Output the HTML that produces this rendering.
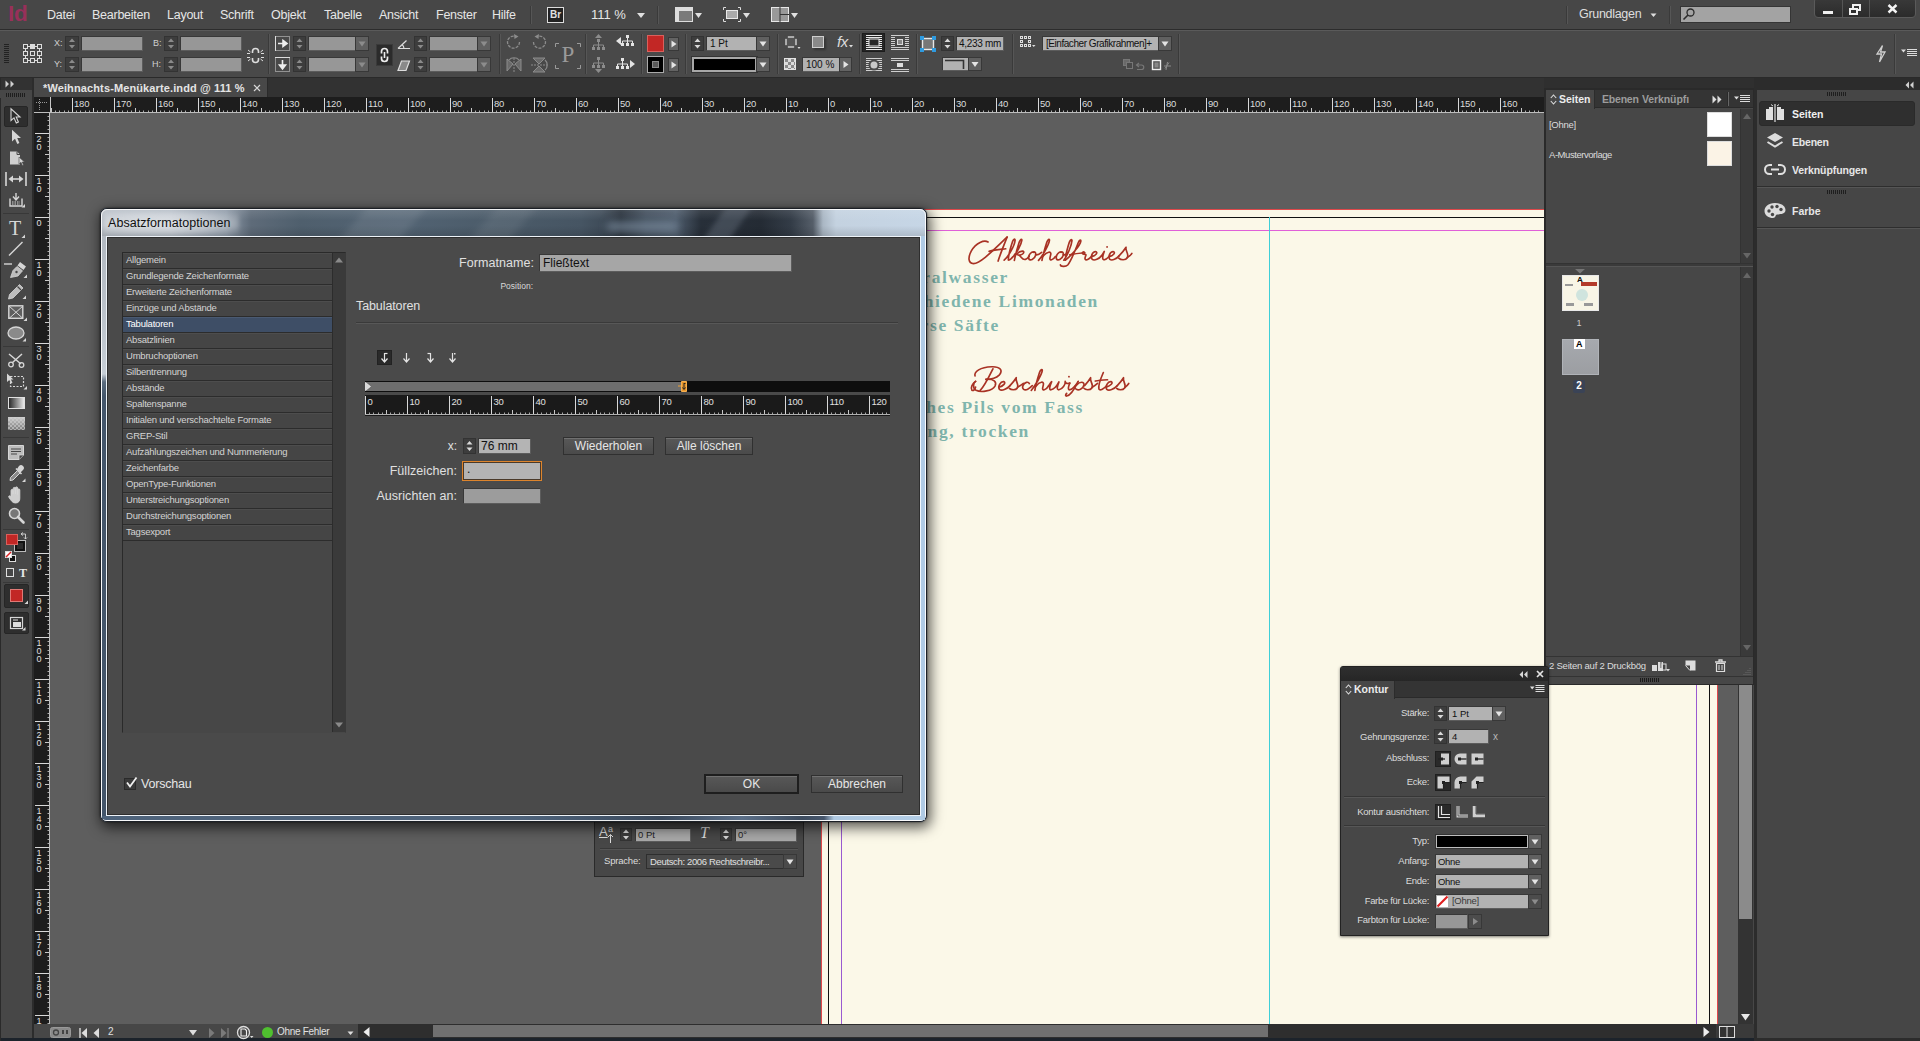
<!DOCTYPE html>
<html><head><meta charset="utf-8"><title>InDesign</title>
<style>
html,body{margin:0;padding:0;width:1920px;height:1041px;overflow:hidden;background:#474747;}
body{font-family:"Liberation Sans",sans-serif;font-size:11px;color:#dcdcdc;position:relative;}
div,svg{position:absolute;box-sizing:border-box;}
svg{overflow:visible;}
</style></head><body>
<div style="left:0px;top:0px;width:1920px;height:30px;background:#474747;border-bottom:1px solid #2c2c2c;"></div>
<div style="left:0px;top:30px;width:1920px;height:48px;background:#494949;border-top:1px solid #5a5a5a;border-bottom:1px solid #2a2a2a;"></div>
<div style="left:0px;top:78px;width:1920px;height:19px;background:#323232;"></div>
<div style="left:34px;top:78px;width:200px;height:19px;background:#484848;"></div>
<div style="left:50px;top:113px;width:1700px;height:911px;background:#5e5e5e;"></div>
<div style="left:34px;top:97px;width:1512px;height:16px;background:#1d1d1d;"></div>
<div style="left:34px;top:113px;width:16px;height:911px;background:#1d1d1d;"></div>
<div style="left:0px;top:97px;width:32px;height:944px;background:#474747;"></div>
<div style="left:32px;top:78px;width:2px;height:963px;background:#2c2c2c;"></div>
<div style="left:821px;top:209px;width:897px;height:815px;background:#fbf8e8;"></div>
<div style="left:34px;top:1024px;width:1720px;height:17px;background:#474747;"></div>
<div style="left:8px;top:4px;height:20px;line-height:20px;font-size:22.5px;color:#98305a;white-space:nowrap;font-weight:bold;letter-spacing:-0.3px;">Id</div>
<div style="left:47px;top:5px;height:20px;line-height:20px;font-size:12.5px;color:#e6e6e6;white-space:nowrap;letter-spacing:-0.25px;">Datei</div>
<div style="left:92px;top:5px;height:20px;line-height:20px;font-size:12.5px;color:#e6e6e6;white-space:nowrap;letter-spacing:-0.25px;">Bearbeiten</div>
<div style="left:167px;top:5px;height:20px;line-height:20px;font-size:12.5px;color:#e6e6e6;white-space:nowrap;letter-spacing:-0.25px;">Layout</div>
<div style="left:220px;top:5px;height:20px;line-height:20px;font-size:12.5px;color:#e6e6e6;white-space:nowrap;letter-spacing:-0.25px;">Schrift</div>
<div style="left:271px;top:5px;height:20px;line-height:20px;font-size:12.5px;color:#e6e6e6;white-space:nowrap;letter-spacing:-0.25px;">Objekt</div>
<div style="left:324px;top:5px;height:20px;line-height:20px;font-size:12.5px;color:#e6e6e6;white-space:nowrap;letter-spacing:-0.25px;">Tabelle</div>
<div style="left:379px;top:5px;height:20px;line-height:20px;font-size:12.5px;color:#e6e6e6;white-space:nowrap;letter-spacing:-0.25px;">Ansicht</div>
<div style="left:436px;top:5px;height:20px;line-height:20px;font-size:12.5px;color:#e6e6e6;white-space:nowrap;letter-spacing:-0.25px;">Fenster</div>
<div style="left:492px;top:5px;height:20px;line-height:20px;font-size:12.5px;color:#e6e6e6;white-space:nowrap;letter-spacing:-0.25px;">Hilfe</div>
<div style="left:530px;top:6px;width:1px;height:18px;background:#3a3a3a;"></div><div style="left:531px;top:6px;width:1px;height:18px;background:#565656;"></div>
<svg style="left:547px;top:7px;" width="17" height="16" viewBox="0 0 17 16"><rect x="0.5" y="0.5" width="16" height="15" fill="#222" stroke="#ddd"/></svg>
<div style="left:550px;top:5px;height:20px;line-height:20px;font-size:10px;color:#e0e0e0;white-space:nowrap;font-weight:bold;">Br</div>
<div style="left:591px;top:5px;height:20px;line-height:20px;font-size:13px;color:#e6e6e6;white-space:nowrap;">111 %</div>
<svg style="left:636px;top:12px;" width="10" height="7" viewBox="0 0 10 7"><path d="M1 1 L9 1 L5 6Z" fill="#e0e0e0"/></svg>
<div style="left:657px;top:6px;width:1px;height:18px;background:#3a3a3a;"></div><div style="left:658px;top:6px;width:1px;height:18px;background:#565656;"></div>
<svg style="left:675px;top:7px;" width="28" height="16" viewBox="0 0 28 16"><rect x="0.5" y="0.5" width="17" height="14" fill="#7a7a7a" stroke="#ddd"/><rect x="1" y="1" width="17" height="3" fill="#ddd"/><rect x="1" y="1" width="3" height="14" fill="#ddd"/><path d="M20 6 L27 6 L23.5 11Z" fill="#e0e0e0"/></svg>
<svg style="left:723px;top:7px;" width="28" height="16" viewBox="0 0 28 16"><path d="M0.5 3 V0.5 H3 M15 0.5 H17.5 V3 M17.5 12 V14.5 H15 M3 14.5 H0.5 V12" fill="none" stroke="#ddd"/><rect x="3.5" y="3.5" width="11" height="8" fill="#aaa" stroke="#e8e8e8"/><path d="M20 6 L27 6 L23.5 11Z" fill="#e0e0e0"/></svg>
<svg style="left:771px;top:7px;" width="28" height="16" viewBox="0 0 28 16"><rect x="0.5" y="0.5" width="17" height="14" fill="#999" stroke="#e8e8e8"/><path d="M9 0 V15 M9 7.5 H18" stroke="#333" stroke-width="1"/><path d="M20 6 L27 6 L23.5 11Z" fill="#e0e0e0"/></svg>
<div style="left:1566px;top:6px;width:1px;height:18px;background:#3a3a3a;"></div><div style="left:1567px;top:6px;width:1px;height:18px;background:#565656;"></div>
<div style="left:1579px;top:4px;height:20px;line-height:20px;font-size:12.5px;color:#dedede;white-space:nowrap;letter-spacing:-0.3px;">Grundlagen</div>
<svg style="left:1650px;top:13px;" width="8" height="5" viewBox="0 0 8 5"><path d="M0.5 0.5 L6.5 0.5 L3.5 4Z" fill="#ddd"/></svg>
<div style="left:1669px;top:6px;width:1px;height:18px;background:#3a3a3a;"></div><div style="left:1670px;top:6px;width:1px;height:18px;background:#565656;"></div>
<div style="left:1680px;top:6px;width:111px;height:17px;background:#a3a3a3;border:1px solid #353535;"></div>
<svg style="left:1682px;top:7px;" width="14" height="14" viewBox="0 0 14 14"><circle cx="8.5" cy="5.5" r="3.5" fill="none" stroke="#2a2a2a" stroke-width="1.3"/><path d="M6 8 L1.5 12.5" stroke="#2a2a2a" stroke-width="1.6"/></svg>
<div style="left:1814px;top:-3px;width:102px;height:21px;background:linear-gradient(#3a3a3a,#2b2b2b);border:1px solid #5a5a5a;border-radius:4px;"></div>
<div style="left:1842px;top:0px;width:1px;height:17px;background:#555;"></div>
<div style="left:1869px;top:0px;width:1px;height:17px;background:#555;"></div>
<div style="left:1823px;top:11px;width:10px;height:3px;background:#f0f0f0;"></div>
<svg style="left:1849px;top:4px;" width="14" height="12" viewBox="0 0 14 12"><rect x="4" y="1" width="7" height="5" fill="none" stroke="#f0f0f0" stroke-width="2"/><rect x="1" y="5" width="7" height="5" fill="#2e2e2e" stroke="#f0f0f0" stroke-width="2"/></svg>
<svg style="left:1887px;top:4px;" width="12" height="10" viewBox="0 0 12 10"><path d="M1.5 1 L9.5 8.5 M9.5 1 L1.5 8.5" stroke="#f4f4f4" stroke-width="2.4"/></svg>
<div style="left:4px;top:44px;width:5px;height:20px;background:repeating-linear-gradient(#222 0 1px,transparent 1px 2px);"></div>
<svg style="left:23px;top:44px;" width="20" height="20" viewBox="0 0 20 20"><rect x="0.5" y="0.5" width="4" height="4" fill="none" stroke="#ddd"/><rect x="7.5" y="0.5" width="4" height="4" fill="#ddd" stroke="#ddd"/><rect x="14.5" y="0.5" width="4" height="4" fill="none" stroke="#ddd"/><rect x="0.5" y="7.5" width="4" height="4" fill="none" stroke="#ddd"/><rect x="7.5" y="7.5" width="4" height="4" fill="none" stroke="#ddd"/><rect x="14.5" y="7.5" width="4" height="4" fill="none" stroke="#ddd"/><rect x="0.5" y="14.5" width="4" height="4" fill="none" stroke="#ddd"/><rect x="7.5" y="14.5" width="4" height="4" fill="none" stroke="#ddd"/><rect x="14.5" y="14.5" width="4" height="4" fill="none" stroke="#ddd"/><path d="M5 2.5 H7 M12 2.5 H14 M5 16.5 H7 M12 16.5 H14 M2.5 5 V7 M2.5 12 V14 M16.5 5 V7 M16.5 12 V14" stroke="#ddd"/></svg>
<div style="left:54px;top:33px;height:20px;line-height:20px;font-size:9px;color:#d0d0d0;white-space:nowrap;">X:</div>
<div style="left:54px;top:54px;height:20px;line-height:20px;font-size:9px;color:#d0d0d0;white-space:nowrap;">Y:</div>
<div style="left:153px;top:33px;height:20px;line-height:20px;font-size:9px;color:#d0d0d0;white-space:nowrap;">B:</div>
<div style="left:152px;top:54px;height:20px;line-height:20px;font-size:9px;color:#d0d0d0;white-space:nowrap;">H:</div>
<svg style="left:65px;top:36px;" width="14" height="15" viewBox="0 0 14 15"><rect x="0.5" y="0.5" width="13" height="14" fill="#3d3d3d" stroke="#333"/><path d="M4.0 6.0 L7.0 2.5 L10.0 6.0Z M4.0 9.0 L7.0 12.5 L10.0 9.0Z" fill="#8a8a8a"/></svg>
<div style="left:81px;top:36px;width:62px;height:15px;background:#979797;border:1px solid #383838;border-bottom-color:#5c5c5c;border-right-color:#5c5c5c;color:#111;font-size:11px;line-height:13px;padding-left:3px;white-space:nowrap;overflow:hidden;"></div>
<svg style="left:65px;top:57px;" width="14" height="15" viewBox="0 0 14 15"><rect x="0.5" y="0.5" width="13" height="14" fill="#3d3d3d" stroke="#333"/><path d="M4.0 6.0 L7.0 2.5 L10.0 6.0Z M4.0 9.0 L7.0 12.5 L10.0 9.0Z" fill="#8a8a8a"/></svg>
<div style="left:81px;top:57px;width:62px;height:15px;background:#979797;border:1px solid #383838;border-bottom-color:#5c5c5c;border-right-color:#5c5c5c;color:#111;font-size:11px;line-height:13px;padding-left:3px;white-space:nowrap;overflow:hidden;"></div>
<svg style="left:164px;top:36px;" width="14" height="15" viewBox="0 0 14 15"><rect x="0.5" y="0.5" width="13" height="14" fill="#3d3d3d" stroke="#333"/><path d="M4.0 6.0 L7.0 2.5 L10.0 6.0Z M4.0 9.0 L7.0 12.5 L10.0 9.0Z" fill="#8a8a8a"/></svg>
<div style="left:180px;top:36px;width:62px;height:15px;background:#979797;border:1px solid #383838;border-bottom-color:#5c5c5c;border-right-color:#5c5c5c;color:#111;font-size:11px;line-height:13px;padding-left:3px;white-space:nowrap;overflow:hidden;"></div>
<svg style="left:164px;top:57px;" width="14" height="15" viewBox="0 0 14 15"><rect x="0.5" y="0.5" width="13" height="14" fill="#3d3d3d" stroke="#333"/><path d="M4.0 6.0 L7.0 2.5 L10.0 6.0Z M4.0 9.0 L7.0 12.5 L10.0 9.0Z" fill="#8a8a8a"/></svg>
<div style="left:180px;top:57px;width:62px;height:15px;background:#979797;border:1px solid #383838;border-bottom-color:#5c5c5c;border-right-color:#5c5c5c;color:#111;font-size:11px;line-height:13px;padding-left:3px;white-space:nowrap;overflow:hidden;"></div>
<svg style="left:247px;top:47px;" width="17" height="17" viewBox="0 0 17 17"><path d="M5.5 6 V4.5 A3 3 0 0 1 11.5 4.5 V6 M5.5 11 V12.5 A3 3 0 0 0 11.5 12.5 V11" fill="none" stroke="#ddd" stroke-width="1.6"/><path d="M0 6.5 H3 M14 6.5 H17 M0 10.5 H3 M14 10.5 H17 M1 3 L3.5 5 M16 3 L13.5 5 M1 14 L3.5 12 M16 14 L13.5 12" stroke="#ddd" stroke-width="1"/></svg>
<div style="left:268px;top:34px;width:1px;height:40px;background:#3a3a3a;"></div><div style="left:269px;top:34px;width:1px;height:40px;background:#565656;"></div>
<svg style="left:275px;top:36px;" width="15" height="15" viewBox="0 0 15 15"><rect x="0.5" y="0.5" width="14" height="14" fill="none" stroke="#ddd" stroke-dasharray="1 1"/><path d="M0.5 0 V15" stroke="#ddd"/><path d="M3 7.5 H9 M8 4.5 L12 7.5 L8 10.5Z" stroke="#eee" fill="#eee" stroke-width="1.6"/></svg>
<svg style="left:275px;top:57px;" width="15" height="15" viewBox="0 0 15 15"><rect x="0.5" y="0.5" width="14" height="14" fill="none" stroke="#ddd" stroke-dasharray="1 1"/><path d="M0 0.5 H15" stroke="#ddd"/><path d="M7.5 3 V9 M4.5 8 L7.5 12 L10.5 8Z" stroke="#eee" fill="#eee" stroke-width="1.6"/></svg>
<svg style="left:293px;top:36px;" width="13" height="15" viewBox="0 0 13 15"><rect x="0.5" y="0.5" width="12" height="14" fill="#3d3d3d" stroke="#333"/><path d="M3.5 6.0 L6.5 2.5 L9.5 6.0Z M3.5 9.0 L6.5 12.5 L9.5 9.0Z" fill="#8a8a8a"/></svg>
<div style="left:308px;top:36px;width:48px;height:15px;background:#979797;border:1px solid #383838;border-bottom-color:#5c5c5c;border-right-color:#5c5c5c;color:#111;font-size:11px;line-height:13px;padding-left:3px;white-space:nowrap;overflow:hidden;"></div>
<svg style="left:355px;top:36px;" width="14" height="15" viewBox="0 0 14 15"><rect x="0.5" y="0.5" width="13" height="14" fill="#606060" stroke="#383838"/><path d="M3.5 5.5 L10.5 5.5 L7.0 10.5Z" fill="#8c8c8c"/></svg>
<svg style="left:293px;top:57px;" width="13" height="15" viewBox="0 0 13 15"><rect x="0.5" y="0.5" width="12" height="14" fill="#3d3d3d" stroke="#333"/><path d="M3.5 6.0 L6.5 2.5 L9.5 6.0Z M3.5 9.0 L6.5 12.5 L9.5 9.0Z" fill="#8a8a8a"/></svg>
<div style="left:308px;top:57px;width:48px;height:15px;background:#979797;border:1px solid #383838;border-bottom-color:#5c5c5c;border-right-color:#5c5c5c;color:#111;font-size:11px;line-height:13px;padding-left:3px;white-space:nowrap;overflow:hidden;"></div>
<svg style="left:355px;top:57px;" width="14" height="15" viewBox="0 0 14 15"><rect x="0.5" y="0.5" width="13" height="14" fill="#606060" stroke="#383838"/><path d="M3.5 5.5 L10.5 5.5 L7.0 10.5Z" fill="#8c8c8c"/></svg>
<div style="left:376px;top:44px;width:17px;height:22px;background:#2b2b2b;border:1px solid #3a3a3a;"></div>
<svg style="left:379px;top:47px;" width="11" height="16" viewBox="0 0 11 16"><path d="M2.5 6.5 V4.5 A3 3 0 0 1 8.5 4.5 V6.5 M2.5 9.5 V11.5 A3 3 0 0 0 8.5 11.5 V9.5" fill="none" stroke="#eee" stroke-width="1.7"/><path d="M5.5 5 V11" stroke="#eee" stroke-width="1.6"/></svg>
<svg style="left:397px;top:39px;" width="14" height="11" viewBox="0 0 14 11"><path d="M1 9.5 H13 M1 9.5 L9.5 1.5 M7 9.5 A6 6 0 0 0 5 5.5" fill="none" stroke="#ddd" stroke-width="1.2"/></svg>
<svg style="left:397px;top:60px;" width="14" height="12" viewBox="0 0 14 12"><path d="M4.5 1 H12.5 L9 10.5 H1Z" fill="#8a8a8a" stroke="#ddd" stroke-width="1.2"/></svg>
<svg style="left:414px;top:36px;" width="13" height="15" viewBox="0 0 13 15"><rect x="0.5" y="0.5" width="12" height="14" fill="#3d3d3d" stroke="#333"/><path d="M3.5 6.0 L6.5 2.5 L9.5 6.0Z M3.5 9.0 L6.5 12.5 L9.5 9.0Z" fill="#8a8a8a"/></svg>
<div style="left:429px;top:36px;width:49px;height:15px;background:#979797;border:1px solid #383838;border-bottom-color:#5c5c5c;border-right-color:#5c5c5c;color:#111;font-size:11px;line-height:13px;padding-left:3px;white-space:nowrap;overflow:hidden;"></div>
<svg style="left:477px;top:36px;" width="14" height="15" viewBox="0 0 14 15"><rect x="0.5" y="0.5" width="13" height="14" fill="#606060" stroke="#383838"/><path d="M3.5 5.5 L10.5 5.5 L7.0 10.5Z" fill="#8c8c8c"/></svg>
<svg style="left:414px;top:57px;" width="13" height="15" viewBox="0 0 13 15"><rect x="0.5" y="0.5" width="12" height="14" fill="#3d3d3d" stroke="#333"/><path d="M3.5 6.0 L6.5 2.5 L9.5 6.0Z M3.5 9.0 L6.5 12.5 L9.5 9.0Z" fill="#8a8a8a"/></svg>
<div style="left:429px;top:57px;width:49px;height:15px;background:#979797;border:1px solid #383838;border-bottom-color:#5c5c5c;border-right-color:#5c5c5c;color:#111;font-size:11px;line-height:13px;padding-left:3px;white-space:nowrap;overflow:hidden;"></div>
<svg style="left:477px;top:57px;" width="14" height="15" viewBox="0 0 14 15"><rect x="0.5" y="0.5" width="13" height="14" fill="#606060" stroke="#383838"/><path d="M3.5 5.5 L10.5 5.5 L7.0 10.5Z" fill="#8c8c8c"/></svg>
<div style="left:499px;top:34px;width:1px;height:40px;background:#3a3a3a;"></div><div style="left:500px;top:34px;width:1px;height:40px;background:#565656;"></div>
<svg style="left:506px;top:34px;" width="16" height="16" viewBox="0 0 16 16"><path d="M13.5 8 A6 6 0 1 1 9 2.3" fill="none" stroke="#8c8c8c" stroke-width="1.3" stroke-dasharray="3 1.2"/><path d="M8 0 L12.5 2.5 L8.5 5Z" fill="#8c8c8c"/></svg>
<svg style="left:531px;top:34px;" width="16" height="16" viewBox="0 0 16 16"><path d="M2.5 8 A6 6 0 1 0 7 2.3" fill="none" stroke="#8c8c8c" stroke-width="1.3" stroke-dasharray="3 1.2"/><path d="M8 0 L3.5 2.5 L7.5 5Z" fill="#8c8c8c"/></svg>
<svg style="left:506px;top:56px;" width="16" height="16" viewBox="0 0 16 16"><path d="M1 3 L7 8 L1 15Z M15 3 L9 8 L15 15Z" fill="#6a6a6a" stroke="#8c8c8c"/><path d="M8 2 V16" stroke="#8c8c8c" stroke-dasharray="2 1"/><path d="M3 4 A6 5 0 0 1 13 4" fill="none" stroke="#8c8c8c" stroke-width="1.2"/></svg>
<svg style="left:530px;top:56px;" width="18" height="16" viewBox="0 0 18 16"><path d="M3 2 L9 8 L15 2Z M3 16 L9 10 L15 16Z" fill="#6a6a6a" stroke="#8c8c8c"/><path d="M1 9 H17" stroke="#8c8c8c" stroke-dasharray="2 1"/><path d="M15 4 A5 6 0 0 1 15 14" fill="none" stroke="#8c8c8c" stroke-width="1.2"/></svg>
<svg style="left:555px;top:43px;" width="26" height="26" viewBox="0 0 26 26"><path d="M0.5 4 V0.5 H4 M22 0.5 H25.5 V4 M25.5 22 V25.5 H22 M4 25.5 H0.5 V22" fill="none" stroke="#9a9a9a"/></svg>
<div style="left:418px;width:300px;text-align:center;top:45px;height:20px;line-height:20px;font-size:23px;color:#9a9a9a;white-space:nowrap;font-family:'Liberation Serif',serif;">P</div>
<div style="left:585px;top:34px;width:1px;height:40px;background:#3a3a3a;"></div><div style="left:586px;top:34px;width:1px;height:40px;background:#565656;"></div>
<svg style="left:592px;top:39px;" width="13" height="11" viewBox="0 0 13 11"><rect x="5" y="0" width="3" height="3" fill="#8c8c8c"/><path d="M6.5 3 V6 M1.5 8 V6 H11.5 V8 M6.5 6 V8" fill="none" stroke="#8c8c8c"/><rect x="0" y="8" width="3" height="3" fill="#8c8c8c"/><rect x="5" y="8" width="3" height="3" fill="#8c8c8c"/><rect x="10" y="8" width="3" height="3" fill="#8c8c8c"/></svg>
<svg style="left:595px;top:34px;" width="7" height="4" viewBox="0 0 7 4"><path d="M0 4 L3.5 0 L7 4Z" fill="#8c8c8c"/></svg>
<svg style="left:592px;top:57px;" width="13" height="11" viewBox="0 0 13 11"><rect x="5" y="0" width="3" height="3" fill="#8c8c8c"/><path d="M6.5 3 V6 M1.5 8 V6 H11.5 V8 M6.5 6 V8" fill="none" stroke="#8c8c8c"/><rect x="0" y="8" width="3" height="3" fill="#8c8c8c"/><rect x="5" y="8" width="3" height="3" fill="#8c8c8c"/><rect x="10" y="8" width="3" height="3" fill="#8c8c8c"/></svg>
<svg style="left:595px;top:69px;" width="7" height="4" viewBox="0 0 7 4"><path d="M0 0 L3.5 4 L7 0Z" fill="#8c8c8c"/></svg>
<svg style="left:621px;top:35px;" width="13" height="11" viewBox="0 0 13 11"><rect x="5" y="0" width="3" height="3" fill="#e4e4e4"/><path d="M6.5 3 V6 M1.5 8 V6 H11.5 V8 M6.5 6 V8" fill="none" stroke="#e4e4e4"/><rect x="0" y="8" width="3" height="3" fill="#e4e4e4"/><rect x="5" y="8" width="3" height="3" fill="#e4e4e4"/><rect x="10" y="8" width="3" height="3" fill="#e4e4e4"/></svg>
<svg style="left:616px;top:37px;" width="5" height="8" viewBox="0 0 5 8"><path d="M5 0 L0 4 L5 8Z" fill="#e4e4e4"/></svg>
<svg style="left:616px;top:58px;" width="13" height="11" viewBox="0 0 13 11"><rect x="5" y="0" width="3" height="3" fill="#e4e4e4"/><path d="M6.5 3 V6 M1.5 8 V6 H11.5 V8 M6.5 6 V8" fill="none" stroke="#e4e4e4"/><rect x="0" y="8" width="3" height="3" fill="#e4e4e4"/><rect x="5" y="8" width="3" height="3" fill="#e4e4e4"/><rect x="10" y="8" width="3" height="3" fill="#e4e4e4"/></svg>
<svg style="left:630px;top:60px;" width="5" height="8" viewBox="0 0 5 8"><path d="M0 0 L5 4 L0 8Z" fill="#e4e4e4"/></svg>
<div style="left:641px;top:34px;width:1px;height:40px;background:#3a3a3a;"></div><div style="left:642px;top:34px;width:1px;height:40px;background:#565656;"></div>
<div style="left:647px;top:35px;width:17px;height:17px;background:#c22725;border:1px solid #d9605c;"></div>
<svg style="left:668px;top:37px;" width="11" height="14" viewBox="0 0 11 14"><rect x="0.5" y="0.5" width="10" height="13" fill="#636363" stroke="#383838"/><path d="M3.5 3.5 L8.5 7.0 L3.5 10.5Z" fill="#e4e4e4"/></svg>
<div style="left:647px;top:56px;width:17px;height:17px;background:#000;border:1px solid #aaa;"></div>
<div style="left:652px;top:61px;width:7px;height:7px;background:#5a5a5a;border:1px solid #8a8a8a;"></div>
<svg style="left:668px;top:58px;" width="11" height="14" viewBox="0 0 11 14"><rect x="0.5" y="0.5" width="10" height="13" fill="#636363" stroke="#383838"/><path d="M3.5 3.5 L8.5 7.0 L3.5 10.5Z" fill="#e4e4e4"/></svg>
<div style="left:685px;top:34px;width:1px;height:40px;background:#3a3a3a;"></div><div style="left:686px;top:34px;width:1px;height:40px;background:#565656;"></div>
<svg style="left:691px;top:36px;" width="13" height="15" viewBox="0 0 13 15"><rect x="0.5" y="0.5" width="12" height="14" fill="#3d3d3d" stroke="#333"/><path d="M3.5 6.0 L6.5 2.5 L9.5 6.0Z M3.5 9.0 L6.5 12.5 L9.5 9.0Z" fill="#d8d8d8"/></svg>
<div style="left:706px;top:36px;width:51px;height:15px;background:#b2b2b2;border:1px solid #383838;border-bottom-color:#5c5c5c;border-right-color:#5c5c5c;color:#111;font-size:10px;line-height:13px;padding-left:3px;white-space:nowrap;overflow:hidden;">1 Pt</div>
<svg style="left:756px;top:36px;" width="14" height="15" viewBox="0 0 14 15"><rect x="0.5" y="0.5" width="13" height="14" fill="#606060" stroke="#383838"/><path d="M3.5 5.5 L10.5 5.5 L7.0 10.5Z" fill="#e4e4e4"/></svg>
<div style="left:692px;top:57px;width:65px;height:15px;background:#000;border:2px solid #a8a8a8;outline:1px solid #333;"></div>
<svg style="left:756px;top:57px;" width="14" height="15" viewBox="0 0 14 15"><rect x="0.5" y="0.5" width="13" height="14" fill="#606060" stroke="#383838"/><path d="M3.5 5.5 L10.5 5.5 L7.0 10.5Z" fill="#e4e4e4"/></svg>
<div style="left:777px;top:34px;width:1px;height:40px;background:#3a3a3a;"></div><div style="left:778px;top:34px;width:1px;height:40px;background:#565656;"></div>
<svg style="left:785px;top:36px;" width="16" height="14" viewBox="0 0 16 14"><rect x="1" y="1" width="10" height="10" fill="#555" stroke="#ddd" stroke-width="1.3"/><circle cx="1" cy="1" r="2" fill="#494949"/><circle cx="11" cy="1" r="2" fill="#494949"/><circle cx="1" cy="11" r="2" fill="#494949"/><circle cx="11" cy="11" r="2" fill="#494949"/><path d="M12.5 11 H15.5 L14 13Z" fill="#ddd"/></svg>
<div style="left:814px;top:38px;width:12px;height:12px;background:#333;filter:blur(1px);"></div>
<div style="left:812px;top:36px;width:12px;height:12px;background:#8a8a8a;border:1px solid #cfcfcf;"></div>
<div style="left:837px;top:32px;height:20px;line-height:20px;font-size:15px;color:#dcdcdc;white-space:nowrap;font-style:italic;letter-spacing:-0.5px;">fx</div>
<svg style="left:849px;top:45px;" width="5" height="3" viewBox="0 0 5 3"><path d="M0 0 H4 L2 2.5Z" fill="#ddd"/></svg>
<div style="left:784px;top:58px;width:12px;height:12px;background:#ddd;background-image:conic-gradient(#ddd 25%,#8a8a8a 0 50%,#ddd 0 75%,#8a8a8a 0);background-size:6px 6px;border:1px solid #e4e4e4;"></div>
<div style="left:802px;top:57px;width:38px;height:15px;background:#b2b2b2;border:1px solid #383838;border-bottom-color:#5c5c5c;border-right-color:#5c5c5c;color:#111;font-size:10px;line-height:13px;padding-left:3px;white-space:nowrap;overflow:hidden;">100 %</div>
<svg style="left:839px;top:57px;" width="13" height="15" viewBox="0 0 13 15"><rect x="0.5" y="0.5" width="12" height="14" fill="#636363" stroke="#383838"/><path d="M4.5 4.0 L9.5 7.5 L4.5 11.0Z" fill="#e4e4e4"/></svg>
<div style="left:859px;top:34px;width:1px;height:40px;background:#3a3a3a;"></div><div style="left:860px;top:34px;width:1px;height:40px;background:#565656;"></div>
<div style="left:862px;top:33px;width:23px;height:19px;background:#262626;border:1px solid #1c1c1c;"></div>
<svg style="left:866px;top:35px;" width="16" height="15" viewBox="0 0 16 15"><path d="M0 0.5 H16" stroke="#e6e6e6"/><path d="M0 2.5 H16" stroke="#e6e6e6"/><path d="M0 4.5 H16" stroke="#e6e6e6"/><path d="M0 6.5 H16" stroke="#e6e6e6"/><path d="M0 8.5 H16" stroke="#e6e6e6"/><path d="M0 10.5 H16" stroke="#e6e6e6"/><path d="M0 12.5 H16" stroke="#e6e6e6"/><path d="M0 14.5 H16" stroke="#e6e6e6"/><rect x="3" y="4" width="10" height="7" fill="#262626" stroke="#e6e6e6"/></svg>
<svg style="left:891px;top:35px;" width="18" height="15" viewBox="0 0 18 15"><path d="M0 0.5 H18" stroke="#cfcfcf"/><path d="M0 2.5 H18" stroke="#cfcfcf"/><path d="M0 4.5 H18" stroke="#cfcfcf"/><path d="M0 6.5 H18" stroke="#cfcfcf"/><path d="M0 8.5 H18" stroke="#cfcfcf"/><path d="M0 10.5 H18" stroke="#cfcfcf"/><path d="M0 12.5 H18" stroke="#cfcfcf"/><path d="M0 14.5 H18" stroke="#cfcfcf"/><rect x="4" y="2" width="10" height="10" fill="#494949"/><rect x="6.5" y="4.5" width="5" height="5" fill="#8a8a8a" stroke="#ddd"/></svg>
<svg style="left:866px;top:58px;" width="16" height="14" viewBox="0 0 16 14"><path d="M0 0.5 H16" stroke="#cfcfcf"/><path d="M0 2.5 H16" stroke="#cfcfcf"/><path d="M0 4.5 H16" stroke="#cfcfcf"/><path d="M0 6.5 H16" stroke="#cfcfcf"/><path d="M0 8.5 H16" stroke="#cfcfcf"/><path d="M0 10.5 H16" stroke="#cfcfcf"/><path d="M0 12.5 H16" stroke="#cfcfcf"/><circle cx="8" cy="7" r="5.5" fill="#494949"/><circle cx="8" cy="7" r="3.5" fill="#c8c8c8"/></svg>
<svg style="left:891px;top:58px;" width="18" height="14" viewBox="0 0 18 14"><path d="M0 0.5 H18 M0 2.5 H18 M0 11.5 H18 M0 13.5 H18" stroke="#cfcfcf"/><rect x="6" y="5" width="6" height="4" fill="#ddd"/></svg>
<div style="left:916px;top:34px;width:1px;height:40px;background:#3a3a3a;"></div><div style="left:917px;top:34px;width:1px;height:40px;background:#565656;"></div>
<svg style="left:919px;top:35px;" width="18" height="18" viewBox="0 0 18 18"><rect x="3.5" y="3.5" width="11" height="11" fill="#777" stroke="#e8e8e8" stroke-width="1.4"/><g fill="#2f9be0"><rect x="1" y="1" width="4" height="4"/><rect x="13" y="1" width="4" height="4"/><rect x="1" y="13" width="4" height="4"/><rect x="13" y="13" width="4" height="4"/></g></svg>
<svg style="left:941px;top:36px;" width="13" height="15" viewBox="0 0 13 15"><rect x="0.5" y="0.5" width="12" height="14" fill="#3d3d3d" stroke="#333"/><path d="M3.5 6.0 L6.5 2.5 L9.5 6.0Z M3.5 9.0 L6.5 12.5 L9.5 9.0Z" fill="#d8d8d8"/></svg>
<div style="left:956px;top:36px;width:48px;height:15px;background:#b2b2b2;border:1px solid #383838;border-bottom-color:#5c5c5c;border-right-color:#5c5c5c;color:#111;font-size:10px;line-height:13px;padding-left:2px;white-space:nowrap;overflow:hidden;letter-spacing:-0.3px;">4,233 mm</div>
<div style="left:942px;top:57px;width:27px;height:14px;background:#b2b2b2;border:1px solid #383838;border-bottom-color:#5c5c5c;border-right-color:#5c5c5c;color:#111;font-size:11px;line-height:12px;padding-left:3px;white-space:nowrap;overflow:hidden;"></div>
<svg style="left:945px;top:59px;" width="22" height="10" viewBox="0 0 22 10"><path d="M0 1.5 H18.5 V10" fill="none" stroke="#333" stroke-width="1.6"/></svg>
<svg style="left:968px;top:57px;" width="14" height="14" viewBox="0 0 14 14"><rect x="0.5" y="0.5" width="13" height="13" fill="#606060" stroke="#383838"/><path d="M3.5 5.0 L10.5 5.0 L7.0 10.0Z" fill="#e4e4e4"/></svg>
<div style="left:1012px;top:34px;width:1px;height:40px;background:#3a3a3a;"></div><div style="left:1013px;top:34px;width:1px;height:40px;background:#565656;"></div>
<svg style="left:1020px;top:36px;" width="16" height="12" viewBox="0 0 16 12"><rect x="0.5" y="0.5" width="2" height="2" fill="none" stroke="#ddd"/><rect x="0.5" y="8.5" width="2" height="2" fill="none" stroke="#ddd"/><rect x="4.5" y="0.5" width="2" height="2" fill="none" stroke="#ddd"/><rect x="4.5" y="8.5" width="2" height="2" fill="none" stroke="#ddd"/><rect x="8.5" y="0.5" width="2" height="2" fill="none" stroke="#ddd"/><rect x="8.5" y="8.5" width="2" height="2" fill="none" stroke="#ddd"/><rect x="0.5" y="4.5" width="2" height="2" fill="none" stroke="#ddd"/><rect x="8.5" y="4.5" width="2" height="2" fill="none" stroke="#ddd"/><path d="M12 9 H15.5 L13.7 11Z" fill="#ddd"/></svg>
<div style="left:1042px;top:36px;width:117px;height:15px;background:#b2b2b2;border:1px solid #383838;border-bottom-color:#5c5c5c;border-right-color:#5c5c5c;color:#111;font-size:10px;line-height:13px;padding-left:3px;white-space:nowrap;overflow:hidden;letter-spacing:-0.45px;">[Einfacher Grafikrahmen]+</div>
<svg style="left:1158px;top:36px;" width="14" height="15" viewBox="0 0 14 15"><rect x="0.5" y="0.5" width="13" height="14" fill="#606060" stroke="#383838"/><path d="M3.5 5.5 L10.5 5.5 L7.0 10.5Z" fill="#e4e4e4"/></svg>
<svg style="left:1123px;top:59px;" width="22" height="12" viewBox="0 0 22 12"><rect x="0.5" y="0.5" width="6" height="6" fill="#6a6a6a" stroke="#777"/><rect x="3.5" y="3.5" width="6" height="6" fill="#494949" stroke="#777"/><path d="M14 6 H18.5 A2 2 0 0 1 18.5 10.5 H14 M16 4 L13.5 6 L16 8" fill="none" stroke="#777" stroke-width="1.2"/></svg>
<svg style="left:1152px;top:60px;" width="20" height="11" viewBox="0 0 20 11"><rect x="0.5" y="0.5" width="8" height="9" fill="#555" stroke="#eee" stroke-width="1.4"/><rect x="2.5" y="2.5" width="4" height="5" fill="#888"/><path d="M12 6 H19 M15.5 2 L14 10 M17 2.5 L13 8.5" stroke="#8a8a8a" stroke-width="1"/></svg>
<div style="left:1178px;top:34px;width:1px;height:40px;background:#3a3a3a;"></div><div style="left:1179px;top:34px;width:1px;height:40px;background:#565656;"></div>
<svg style="left:1875px;top:45px;" width="12" height="18" viewBox="0 0 12 18"><path d="M7.5 0.5 L2 9 L6.5 9 L4.5 17 L10 7 L5.5 7Z" fill="none" stroke="#d0d0d0" stroke-width="1.3"/></svg>
<div style="left:1894px;top:34px;width:1px;height:40px;background:#3a3a3a;"></div><div style="left:1895px;top:34px;width:1px;height:40px;background:#565656;"></div>
<svg style="left:1901px;top:49px;" width="17" height="8" viewBox="0 0 17 8"><path d="M0 0.5 H5 L2.5 3.5Z" fill="#ddd"/><path d="M6 0.5 H16 M6 2.5 H16 M6 4.5 H16 M6 6.5 H16" stroke="#ddd"/></svg>
<svg style="left:5px;top:80px;" width="10" height="8" viewBox="0 0 10 8"><path d="M0.5 0.5 L4 4 L0.5 7.5Z M5.5 0.5 L9 4 L5.5 7.5Z" fill="#d0d0d0"/></svg>
<div style="left:34px;top:78px;width:234px;height:19px;background:#484848;border-right:1px solid #2a2a2a;"></div>
<div style="left:43px;top:78px;height:20px;line-height:20px;font-size:11px;color:#e4e4e4;white-space:nowrap;font-weight:bold;letter-spacing:0.12px;">*Weihnachts-Menükarte.indd @ 111 %</div>
<svg style="left:253px;top:84px;" width="8" height="8" viewBox="0 0 8 8"><path d="M1 1 L7 7 M7 1 L1 7" stroke="#d8d8d8" stroke-width="1.2"/></svg>
<svg style="left:34px;top:97px;" width="1512" height="16" viewBox="0 0 1512 16"><path d="M17.5 11 V16" stroke="#c8c8c8"/><path d="M21.5 13.5 V16" stroke="#b0b0b0"/><path d="M25.5 13.5 V16" stroke="#b0b0b0"/><path d="M30.5 13.5 V16" stroke="#b0b0b0"/><path d="M34.5 13.5 V16" stroke="#b0b0b0"/><path d="M38.5 1 V16" stroke="#d8d8d8"/><text x="40.0" y="9.5" font-size="9.5" fill="#dcdcdc" font-family="Liberation Sans" letter-spacing="-0.2">180</text><path d="M42.5 13.5 V16" stroke="#b0b0b0"/><path d="M46.5 13.5 V16" stroke="#b0b0b0"/><path d="M51.5 13.5 V16" stroke="#b0b0b0"/><path d="M55.5 13.5 V16" stroke="#b0b0b0"/><path d="M59.5 11 V16" stroke="#c8c8c8"/><path d="M63.5 13.5 V16" stroke="#b0b0b0"/><path d="M67.5 13.5 V16" stroke="#b0b0b0"/><path d="M72.5 13.5 V16" stroke="#b0b0b0"/><path d="M76.5 13.5 V16" stroke="#b0b0b0"/><path d="M80.5 1 V16" stroke="#d8d8d8"/><text x="82.0" y="9.5" font-size="9.5" fill="#dcdcdc" font-family="Liberation Sans" letter-spacing="-0.2">170</text><path d="M84.5 13.5 V16" stroke="#b0b0b0"/><path d="M88.5 13.5 V16" stroke="#b0b0b0"/><path d="M93.5 13.5 V16" stroke="#b0b0b0"/><path d="M97.5 13.5 V16" stroke="#b0b0b0"/><path d="M101.5 11 V16" stroke="#c8c8c8"/><path d="M105.5 13.5 V16" stroke="#b0b0b0"/><path d="M109.5 13.5 V16" stroke="#b0b0b0"/><path d="M114.5 13.5 V16" stroke="#b0b0b0"/><path d="M118.5 13.5 V16" stroke="#b0b0b0"/><path d="M122.5 1 V16" stroke="#d8d8d8"/><text x="124.0" y="9.5" font-size="9.5" fill="#dcdcdc" font-family="Liberation Sans" letter-spacing="-0.2">160</text><path d="M126.5 13.5 V16" stroke="#b0b0b0"/><path d="M130.5 13.5 V16" stroke="#b0b0b0"/><path d="M135.5 13.5 V16" stroke="#b0b0b0"/><path d="M139.5 13.5 V16" stroke="#b0b0b0"/><path d="M143.5 11 V16" stroke="#c8c8c8"/><path d="M147.5 13.5 V16" stroke="#b0b0b0"/><path d="M151.5 13.5 V16" stroke="#b0b0b0"/><path d="M156.5 13.5 V16" stroke="#b0b0b0"/><path d="M160.5 13.5 V16" stroke="#b0b0b0"/><path d="M164.5 1 V16" stroke="#d8d8d8"/><text x="166.0" y="9.5" font-size="9.5" fill="#dcdcdc" font-family="Liberation Sans" letter-spacing="-0.2">150</text><path d="M168.5 13.5 V16" stroke="#b0b0b0"/><path d="M172.5 13.5 V16" stroke="#b0b0b0"/><path d="M177.5 13.5 V16" stroke="#b0b0b0"/><path d="M181.5 13.5 V16" stroke="#b0b0b0"/><path d="M185.5 11 V16" stroke="#c8c8c8"/><path d="M189.5 13.5 V16" stroke="#b0b0b0"/><path d="M193.5 13.5 V16" stroke="#b0b0b0"/><path d="M198.5 13.5 V16" stroke="#b0b0b0"/><path d="M202.5 13.5 V16" stroke="#b0b0b0"/><path d="M206.5 1 V16" stroke="#d8d8d8"/><text x="208.0" y="9.5" font-size="9.5" fill="#dcdcdc" font-family="Liberation Sans" letter-spacing="-0.2">140</text><path d="M210.5 13.5 V16" stroke="#b0b0b0"/><path d="M214.5 13.5 V16" stroke="#b0b0b0"/><path d="M219.5 13.5 V16" stroke="#b0b0b0"/><path d="M223.5 13.5 V16" stroke="#b0b0b0"/><path d="M227.5 11 V16" stroke="#c8c8c8"/><path d="M231.5 13.5 V16" stroke="#b0b0b0"/><path d="M235.5 13.5 V16" stroke="#b0b0b0"/><path d="M240.5 13.5 V16" stroke="#b0b0b0"/><path d="M244.5 13.5 V16" stroke="#b0b0b0"/><path d="M248.5 1 V16" stroke="#d8d8d8"/><text x="250.0" y="9.5" font-size="9.5" fill="#dcdcdc" font-family="Liberation Sans" letter-spacing="-0.2">130</text><path d="M252.5 13.5 V16" stroke="#b0b0b0"/><path d="M256.5 13.5 V16" stroke="#b0b0b0"/><path d="M261.5 13.5 V16" stroke="#b0b0b0"/><path d="M265.5 13.5 V16" stroke="#b0b0b0"/><path d="M269.5 11 V16" stroke="#c8c8c8"/><path d="M273.5 13.5 V16" stroke="#b0b0b0"/><path d="M277.5 13.5 V16" stroke="#b0b0b0"/><path d="M282.5 13.5 V16" stroke="#b0b0b0"/><path d="M286.5 13.5 V16" stroke="#b0b0b0"/><path d="M290.5 1 V16" stroke="#d8d8d8"/><text x="292.0" y="9.5" font-size="9.5" fill="#dcdcdc" font-family="Liberation Sans" letter-spacing="-0.2">120</text><path d="M294.5 13.5 V16" stroke="#b0b0b0"/><path d="M298.5 13.5 V16" stroke="#b0b0b0"/><path d="M303.5 13.5 V16" stroke="#b0b0b0"/><path d="M307.5 13.5 V16" stroke="#b0b0b0"/><path d="M311.5 11 V16" stroke="#c8c8c8"/><path d="M315.5 13.5 V16" stroke="#b0b0b0"/><path d="M319.5 13.5 V16" stroke="#b0b0b0"/><path d="M324.5 13.5 V16" stroke="#b0b0b0"/><path d="M328.5 13.5 V16" stroke="#b0b0b0"/><path d="M332.5 1 V16" stroke="#d8d8d8"/><text x="334.0" y="9.5" font-size="9.5" fill="#dcdcdc" font-family="Liberation Sans" letter-spacing="-0.2">110</text><path d="M336.5 13.5 V16" stroke="#b0b0b0"/><path d="M340.5 13.5 V16" stroke="#b0b0b0"/><path d="M345.5 13.5 V16" stroke="#b0b0b0"/><path d="M349.5 13.5 V16" stroke="#b0b0b0"/><path d="M353.5 11 V16" stroke="#c8c8c8"/><path d="M357.5 13.5 V16" stroke="#b0b0b0"/><path d="M361.5 13.5 V16" stroke="#b0b0b0"/><path d="M366.5 13.5 V16" stroke="#b0b0b0"/><path d="M370.5 13.5 V16" stroke="#b0b0b0"/><path d="M374.5 1 V16" stroke="#d8d8d8"/><text x="376.0" y="9.5" font-size="9.5" fill="#dcdcdc" font-family="Liberation Sans" letter-spacing="-0.2">100</text><path d="M378.5 13.5 V16" stroke="#b0b0b0"/><path d="M382.5 13.5 V16" stroke="#b0b0b0"/><path d="M387.5 13.5 V16" stroke="#b0b0b0"/><path d="M391.5 13.5 V16" stroke="#b0b0b0"/><path d="M395.5 11 V16" stroke="#c8c8c8"/><path d="M399.5 13.5 V16" stroke="#b0b0b0"/><path d="M403.5 13.5 V16" stroke="#b0b0b0"/><path d="M408.5 13.5 V16" stroke="#b0b0b0"/><path d="M412.5 13.5 V16" stroke="#b0b0b0"/><path d="M416.5 1 V16" stroke="#d8d8d8"/><text x="418.0" y="9.5" font-size="9.5" fill="#dcdcdc" font-family="Liberation Sans" letter-spacing="-0.2">90</text><path d="M420.5 13.5 V16" stroke="#b0b0b0"/><path d="M424.5 13.5 V16" stroke="#b0b0b0"/><path d="M429.5 13.5 V16" stroke="#b0b0b0"/><path d="M433.5 13.5 V16" stroke="#b0b0b0"/><path d="M437.5 11 V16" stroke="#c8c8c8"/><path d="M441.5 13.5 V16" stroke="#b0b0b0"/><path d="M445.5 13.5 V16" stroke="#b0b0b0"/><path d="M450.5 13.5 V16" stroke="#b0b0b0"/><path d="M454.5 13.5 V16" stroke="#b0b0b0"/><path d="M458.5 1 V16" stroke="#d8d8d8"/><text x="460.0" y="9.5" font-size="9.5" fill="#dcdcdc" font-family="Liberation Sans" letter-spacing="-0.2">80</text><path d="M462.5 13.5 V16" stroke="#b0b0b0"/><path d="M466.5 13.5 V16" stroke="#b0b0b0"/><path d="M471.5 13.5 V16" stroke="#b0b0b0"/><path d="M475.5 13.5 V16" stroke="#b0b0b0"/><path d="M479.5 11 V16" stroke="#c8c8c8"/><path d="M483.5 13.5 V16" stroke="#b0b0b0"/><path d="M487.5 13.5 V16" stroke="#b0b0b0"/><path d="M492.5 13.5 V16" stroke="#b0b0b0"/><path d="M496.5 13.5 V16" stroke="#b0b0b0"/><path d="M500.5 1 V16" stroke="#d8d8d8"/><text x="502.0" y="9.5" font-size="9.5" fill="#dcdcdc" font-family="Liberation Sans" letter-spacing="-0.2">70</text><path d="M504.5 13.5 V16" stroke="#b0b0b0"/><path d="M508.5 13.5 V16" stroke="#b0b0b0"/><path d="M513.5 13.5 V16" stroke="#b0b0b0"/><path d="M517.5 13.5 V16" stroke="#b0b0b0"/><path d="M521.5 11 V16" stroke="#c8c8c8"/><path d="M525.5 13.5 V16" stroke="#b0b0b0"/><path d="M529.5 13.5 V16" stroke="#b0b0b0"/><path d="M534.5 13.5 V16" stroke="#b0b0b0"/><path d="M538.5 13.5 V16" stroke="#b0b0b0"/><path d="M542.5 1 V16" stroke="#d8d8d8"/><text x="544.0" y="9.5" font-size="9.5" fill="#dcdcdc" font-family="Liberation Sans" letter-spacing="-0.2">60</text><path d="M546.5 13.5 V16" stroke="#b0b0b0"/><path d="M550.5 13.5 V16" stroke="#b0b0b0"/><path d="M555.5 13.5 V16" stroke="#b0b0b0"/><path d="M559.5 13.5 V16" stroke="#b0b0b0"/><path d="M563.5 11 V16" stroke="#c8c8c8"/><path d="M567.5 13.5 V16" stroke="#b0b0b0"/><path d="M571.5 13.5 V16" stroke="#b0b0b0"/><path d="M576.5 13.5 V16" stroke="#b0b0b0"/><path d="M580.5 13.5 V16" stroke="#b0b0b0"/><path d="M584.5 1 V16" stroke="#d8d8d8"/><text x="586.0" y="9.5" font-size="9.5" fill="#dcdcdc" font-family="Liberation Sans" letter-spacing="-0.2">50</text><path d="M588.5 13.5 V16" stroke="#b0b0b0"/><path d="M592.5 13.5 V16" stroke="#b0b0b0"/><path d="M597.5 13.5 V16" stroke="#b0b0b0"/><path d="M601.5 13.5 V16" stroke="#b0b0b0"/><path d="M605.5 11 V16" stroke="#c8c8c8"/><path d="M609.5 13.5 V16" stroke="#b0b0b0"/><path d="M613.5 13.5 V16" stroke="#b0b0b0"/><path d="M618.5 13.5 V16" stroke="#b0b0b0"/><path d="M622.5 13.5 V16" stroke="#b0b0b0"/><path d="M626.5 1 V16" stroke="#d8d8d8"/><text x="628.0" y="9.5" font-size="9.5" fill="#dcdcdc" font-family="Liberation Sans" letter-spacing="-0.2">40</text><path d="M630.5 13.5 V16" stroke="#b0b0b0"/><path d="M634.5 13.5 V16" stroke="#b0b0b0"/><path d="M639.5 13.5 V16" stroke="#b0b0b0"/><path d="M643.5 13.5 V16" stroke="#b0b0b0"/><path d="M647.5 11 V16" stroke="#c8c8c8"/><path d="M651.5 13.5 V16" stroke="#b0b0b0"/><path d="M655.5 13.5 V16" stroke="#b0b0b0"/><path d="M660.5 13.5 V16" stroke="#b0b0b0"/><path d="M664.5 13.5 V16" stroke="#b0b0b0"/><path d="M668.5 1 V16" stroke="#d8d8d8"/><text x="670.0" y="9.5" font-size="9.5" fill="#dcdcdc" font-family="Liberation Sans" letter-spacing="-0.2">30</text><path d="M672.5 13.5 V16" stroke="#b0b0b0"/><path d="M676.5 13.5 V16" stroke="#b0b0b0"/><path d="M681.5 13.5 V16" stroke="#b0b0b0"/><path d="M685.5 13.5 V16" stroke="#b0b0b0"/><path d="M689.5 11 V16" stroke="#c8c8c8"/><path d="M693.5 13.5 V16" stroke="#b0b0b0"/><path d="M697.5 13.5 V16" stroke="#b0b0b0"/><path d="M702.5 13.5 V16" stroke="#b0b0b0"/><path d="M706.5 13.5 V16" stroke="#b0b0b0"/><path d="M710.5 1 V16" stroke="#d8d8d8"/><text x="712.0" y="9.5" font-size="9.5" fill="#dcdcdc" font-family="Liberation Sans" letter-spacing="-0.2">20</text><path d="M714.5 13.5 V16" stroke="#b0b0b0"/><path d="M718.5 13.5 V16" stroke="#b0b0b0"/><path d="M723.5 13.5 V16" stroke="#b0b0b0"/><path d="M727.5 13.5 V16" stroke="#b0b0b0"/><path d="M731.5 11 V16" stroke="#c8c8c8"/><path d="M735.5 13.5 V16" stroke="#b0b0b0"/><path d="M739.5 13.5 V16" stroke="#b0b0b0"/><path d="M744.5 13.5 V16" stroke="#b0b0b0"/><path d="M748.5 13.5 V16" stroke="#b0b0b0"/><path d="M752.5 1 V16" stroke="#d8d8d8"/><text x="754.0" y="9.5" font-size="9.5" fill="#dcdcdc" font-family="Liberation Sans" letter-spacing="-0.2">10</text><path d="M756.5 13.5 V16" stroke="#b0b0b0"/><path d="M760.5 13.5 V16" stroke="#b0b0b0"/><path d="M765.5 13.5 V16" stroke="#b0b0b0"/><path d="M769.5 13.5 V16" stroke="#b0b0b0"/><path d="M773.5 11 V16" stroke="#c8c8c8"/><path d="M777.5 13.5 V16" stroke="#b0b0b0"/><path d="M781.5 13.5 V16" stroke="#b0b0b0"/><path d="M786.5 13.5 V16" stroke="#b0b0b0"/><path d="M790.5 13.5 V16" stroke="#b0b0b0"/><path d="M794.5 1 V16" stroke="#d8d8d8"/><text x="796.0" y="9.5" font-size="9.5" fill="#dcdcdc" font-family="Liberation Sans" letter-spacing="-0.2">0</text><path d="M798.5 13.5 V16" stroke="#b0b0b0"/><path d="M802.5 13.5 V16" stroke="#b0b0b0"/><path d="M807.5 13.5 V16" stroke="#b0b0b0"/><path d="M811.5 13.5 V16" stroke="#b0b0b0"/><path d="M815.5 11 V16" stroke="#c8c8c8"/><path d="M819.5 13.5 V16" stroke="#b0b0b0"/><path d="M823.5 13.5 V16" stroke="#b0b0b0"/><path d="M828.5 13.5 V16" stroke="#b0b0b0"/><path d="M832.5 13.5 V16" stroke="#b0b0b0"/><path d="M836.5 1 V16" stroke="#d8d8d8"/><text x="838.0" y="9.5" font-size="9.5" fill="#dcdcdc" font-family="Liberation Sans" letter-spacing="-0.2">10</text><path d="M840.5 13.5 V16" stroke="#b0b0b0"/><path d="M844.5 13.5 V16" stroke="#b0b0b0"/><path d="M849.5 13.5 V16" stroke="#b0b0b0"/><path d="M853.5 13.5 V16" stroke="#b0b0b0"/><path d="M857.5 11 V16" stroke="#c8c8c8"/><path d="M861.5 13.5 V16" stroke="#b0b0b0"/><path d="M865.5 13.5 V16" stroke="#b0b0b0"/><path d="M870.5 13.5 V16" stroke="#b0b0b0"/><path d="M874.5 13.5 V16" stroke="#b0b0b0"/><path d="M878.5 1 V16" stroke="#d8d8d8"/><text x="880.0" y="9.5" font-size="9.5" fill="#dcdcdc" font-family="Liberation Sans" letter-spacing="-0.2">20</text><path d="M882.5 13.5 V16" stroke="#b0b0b0"/><path d="M886.5 13.5 V16" stroke="#b0b0b0"/><path d="M891.5 13.5 V16" stroke="#b0b0b0"/><path d="M895.5 13.5 V16" stroke="#b0b0b0"/><path d="M899.5 11 V16" stroke="#c8c8c8"/><path d="M903.5 13.5 V16" stroke="#b0b0b0"/><path d="M907.5 13.5 V16" stroke="#b0b0b0"/><path d="M912.5 13.5 V16" stroke="#b0b0b0"/><path d="M916.5 13.5 V16" stroke="#b0b0b0"/><path d="M920.5 1 V16" stroke="#d8d8d8"/><text x="922.0" y="9.5" font-size="9.5" fill="#dcdcdc" font-family="Liberation Sans" letter-spacing="-0.2">30</text><path d="M924.5 13.5 V16" stroke="#b0b0b0"/><path d="M928.5 13.5 V16" stroke="#b0b0b0"/><path d="M933.5 13.5 V16" stroke="#b0b0b0"/><path d="M937.5 13.5 V16" stroke="#b0b0b0"/><path d="M941.5 11 V16" stroke="#c8c8c8"/><path d="M945.5 13.5 V16" stroke="#b0b0b0"/><path d="M949.5 13.5 V16" stroke="#b0b0b0"/><path d="M954.5 13.5 V16" stroke="#b0b0b0"/><path d="M958.5 13.5 V16" stroke="#b0b0b0"/><path d="M962.5 1 V16" stroke="#d8d8d8"/><text x="964.0" y="9.5" font-size="9.5" fill="#dcdcdc" font-family="Liberation Sans" letter-spacing="-0.2">40</text><path d="M966.5 13.5 V16" stroke="#b0b0b0"/><path d="M970.5 13.5 V16" stroke="#b0b0b0"/><path d="M975.5 13.5 V16" stroke="#b0b0b0"/><path d="M979.5 13.5 V16" stroke="#b0b0b0"/><path d="M983.5 11 V16" stroke="#c8c8c8"/><path d="M987.5 13.5 V16" stroke="#b0b0b0"/><path d="M991.5 13.5 V16" stroke="#b0b0b0"/><path d="M996.5 13.5 V16" stroke="#b0b0b0"/><path d="M1000.5 13.5 V16" stroke="#b0b0b0"/><path d="M1004.5 1 V16" stroke="#d8d8d8"/><text x="1006.0" y="9.5" font-size="9.5" fill="#dcdcdc" font-family="Liberation Sans" letter-spacing="-0.2">50</text><path d="M1008.5 13.5 V16" stroke="#b0b0b0"/><path d="M1012.5 13.5 V16" stroke="#b0b0b0"/><path d="M1017.5 13.5 V16" stroke="#b0b0b0"/><path d="M1021.5 13.5 V16" stroke="#b0b0b0"/><path d="M1025.5 11 V16" stroke="#c8c8c8"/><path d="M1029.5 13.5 V16" stroke="#b0b0b0"/><path d="M1033.5 13.5 V16" stroke="#b0b0b0"/><path d="M1038.5 13.5 V16" stroke="#b0b0b0"/><path d="M1042.5 13.5 V16" stroke="#b0b0b0"/><path d="M1046.5 1 V16" stroke="#d8d8d8"/><text x="1048.0" y="9.5" font-size="9.5" fill="#dcdcdc" font-family="Liberation Sans" letter-spacing="-0.2">60</text><path d="M1050.5 13.5 V16" stroke="#b0b0b0"/><path d="M1054.5 13.5 V16" stroke="#b0b0b0"/><path d="M1059.5 13.5 V16" stroke="#b0b0b0"/><path d="M1063.5 13.5 V16" stroke="#b0b0b0"/><path d="M1067.5 11 V16" stroke="#c8c8c8"/><path d="M1071.5 13.5 V16" stroke="#b0b0b0"/><path d="M1075.5 13.5 V16" stroke="#b0b0b0"/><path d="M1080.5 13.5 V16" stroke="#b0b0b0"/><path d="M1084.5 13.5 V16" stroke="#b0b0b0"/><path d="M1088.5 1 V16" stroke="#d8d8d8"/><text x="1090.0" y="9.5" font-size="9.5" fill="#dcdcdc" font-family="Liberation Sans" letter-spacing="-0.2">70</text><path d="M1092.5 13.5 V16" stroke="#b0b0b0"/><path d="M1096.5 13.5 V16" stroke="#b0b0b0"/><path d="M1101.5 13.5 V16" stroke="#b0b0b0"/><path d="M1105.5 13.5 V16" stroke="#b0b0b0"/><path d="M1109.5 11 V16" stroke="#c8c8c8"/><path d="M1113.5 13.5 V16" stroke="#b0b0b0"/><path d="M1117.5 13.5 V16" stroke="#b0b0b0"/><path d="M1122.5 13.5 V16" stroke="#b0b0b0"/><path d="M1126.5 13.5 V16" stroke="#b0b0b0"/><path d="M1130.5 1 V16" stroke="#d8d8d8"/><text x="1132.0" y="9.5" font-size="9.5" fill="#dcdcdc" font-family="Liberation Sans" letter-spacing="-0.2">80</text><path d="M1134.5 13.5 V16" stroke="#b0b0b0"/><path d="M1138.5 13.5 V16" stroke="#b0b0b0"/><path d="M1143.5 13.5 V16" stroke="#b0b0b0"/><path d="M1147.5 13.5 V16" stroke="#b0b0b0"/><path d="M1151.5 11 V16" stroke="#c8c8c8"/><path d="M1155.5 13.5 V16" stroke="#b0b0b0"/><path d="M1159.5 13.5 V16" stroke="#b0b0b0"/><path d="M1164.5 13.5 V16" stroke="#b0b0b0"/><path d="M1168.5 13.5 V16" stroke="#b0b0b0"/><path d="M1172.5 1 V16" stroke="#d8d8d8"/><text x="1174.0" y="9.5" font-size="9.5" fill="#dcdcdc" font-family="Liberation Sans" letter-spacing="-0.2">90</text><path d="M1176.5 13.5 V16" stroke="#b0b0b0"/><path d="M1180.5 13.5 V16" stroke="#b0b0b0"/><path d="M1185.5 13.5 V16" stroke="#b0b0b0"/><path d="M1189.5 13.5 V16" stroke="#b0b0b0"/><path d="M1193.5 11 V16" stroke="#c8c8c8"/><path d="M1197.5 13.5 V16" stroke="#b0b0b0"/><path d="M1201.5 13.5 V16" stroke="#b0b0b0"/><path d="M1206.5 13.5 V16" stroke="#b0b0b0"/><path d="M1210.5 13.5 V16" stroke="#b0b0b0"/><path d="M1214.5 1 V16" stroke="#d8d8d8"/><text x="1216.0" y="9.5" font-size="9.5" fill="#dcdcdc" font-family="Liberation Sans" letter-spacing="-0.2">100</text><path d="M1218.5 13.5 V16" stroke="#b0b0b0"/><path d="M1222.5 13.5 V16" stroke="#b0b0b0"/><path d="M1227.5 13.5 V16" stroke="#b0b0b0"/><path d="M1231.5 13.5 V16" stroke="#b0b0b0"/><path d="M1235.5 11 V16" stroke="#c8c8c8"/><path d="M1239.5 13.5 V16" stroke="#b0b0b0"/><path d="M1243.5 13.5 V16" stroke="#b0b0b0"/><path d="M1248.5 13.5 V16" stroke="#b0b0b0"/><path d="M1252.5 13.5 V16" stroke="#b0b0b0"/><path d="M1256.5 1 V16" stroke="#d8d8d8"/><text x="1258.0" y="9.5" font-size="9.5" fill="#dcdcdc" font-family="Liberation Sans" letter-spacing="-0.2">110</text><path d="M1260.5 13.5 V16" stroke="#b0b0b0"/><path d="M1264.5 13.5 V16" stroke="#b0b0b0"/><path d="M1269.5 13.5 V16" stroke="#b0b0b0"/><path d="M1273.5 13.5 V16" stroke="#b0b0b0"/><path d="M1277.5 11 V16" stroke="#c8c8c8"/><path d="M1281.5 13.5 V16" stroke="#b0b0b0"/><path d="M1285.5 13.5 V16" stroke="#b0b0b0"/><path d="M1290.5 13.5 V16" stroke="#b0b0b0"/><path d="M1294.5 13.5 V16" stroke="#b0b0b0"/><path d="M1298.5 1 V16" stroke="#d8d8d8"/><text x="1300.0" y="9.5" font-size="9.5" fill="#dcdcdc" font-family="Liberation Sans" letter-spacing="-0.2">120</text><path d="M1302.5 13.5 V16" stroke="#b0b0b0"/><path d="M1306.5 13.5 V16" stroke="#b0b0b0"/><path d="M1311.5 13.5 V16" stroke="#b0b0b0"/><path d="M1315.5 13.5 V16" stroke="#b0b0b0"/><path d="M1319.5 11 V16" stroke="#c8c8c8"/><path d="M1323.5 13.5 V16" stroke="#b0b0b0"/><path d="M1327.5 13.5 V16" stroke="#b0b0b0"/><path d="M1332.5 13.5 V16" stroke="#b0b0b0"/><path d="M1336.5 13.5 V16" stroke="#b0b0b0"/><path d="M1340.5 1 V16" stroke="#d8d8d8"/><text x="1342.0" y="9.5" font-size="9.5" fill="#dcdcdc" font-family="Liberation Sans" letter-spacing="-0.2">130</text><path d="M1344.5 13.5 V16" stroke="#b0b0b0"/><path d="M1348.5 13.5 V16" stroke="#b0b0b0"/><path d="M1353.5 13.5 V16" stroke="#b0b0b0"/><path d="M1357.5 13.5 V16" stroke="#b0b0b0"/><path d="M1361.5 11 V16" stroke="#c8c8c8"/><path d="M1365.5 13.5 V16" stroke="#b0b0b0"/><path d="M1369.5 13.5 V16" stroke="#b0b0b0"/><path d="M1374.5 13.5 V16" stroke="#b0b0b0"/><path d="M1378.5 13.5 V16" stroke="#b0b0b0"/><path d="M1382.5 1 V16" stroke="#d8d8d8"/><text x="1384.0" y="9.5" font-size="9.5" fill="#dcdcdc" font-family="Liberation Sans" letter-spacing="-0.2">140</text><path d="M1386.5 13.5 V16" stroke="#b0b0b0"/><path d="M1390.5 13.5 V16" stroke="#b0b0b0"/><path d="M1395.5 13.5 V16" stroke="#b0b0b0"/><path d="M1399.5 13.5 V16" stroke="#b0b0b0"/><path d="M1403.5 11 V16" stroke="#c8c8c8"/><path d="M1407.5 13.5 V16" stroke="#b0b0b0"/><path d="M1411.5 13.5 V16" stroke="#b0b0b0"/><path d="M1416.5 13.5 V16" stroke="#b0b0b0"/><path d="M1420.5 13.5 V16" stroke="#b0b0b0"/><path d="M1424.5 1 V16" stroke="#d8d8d8"/><text x="1426.0" y="9.5" font-size="9.5" fill="#dcdcdc" font-family="Liberation Sans" letter-spacing="-0.2">150</text><path d="M1428.5 13.5 V16" stroke="#b0b0b0"/><path d="M1432.5 13.5 V16" stroke="#b0b0b0"/><path d="M1437.5 13.5 V16" stroke="#b0b0b0"/><path d="M1441.5 13.5 V16" stroke="#b0b0b0"/><path d="M1445.5 11 V16" stroke="#c8c8c8"/><path d="M1449.5 13.5 V16" stroke="#b0b0b0"/><path d="M1453.5 13.5 V16" stroke="#b0b0b0"/><path d="M1458.5 13.5 V16" stroke="#b0b0b0"/><path d="M1462.5 13.5 V16" stroke="#b0b0b0"/><path d="M1466.5 1 V16" stroke="#d8d8d8"/><text x="1468.0" y="9.5" font-size="9.5" fill="#dcdcdc" font-family="Liberation Sans" letter-spacing="-0.2">160</text><path d="M1470.5 13.5 V16" stroke="#b0b0b0"/><path d="M1474.5 13.5 V16" stroke="#b0b0b0"/><path d="M1479.5 13.5 V16" stroke="#b0b0b0"/><path d="M1483.5 13.5 V16" stroke="#b0b0b0"/><path d="M1487.5 11 V16" stroke="#c8c8c8"/><path d="M1491.5 13.5 V16" stroke="#b0b0b0"/><path d="M1495.5 13.5 V16" stroke="#b0b0b0"/><path d="M1500.5 13.5 V16" stroke="#b0b0b0"/><path d="M1504.5 13.5 V16" stroke="#b0b0b0"/><path d="M16.5 0 V16" stroke="#c8c8c8"/><path d="M0 15.5 H1512" stroke="#bdbdbd"/><path d="M2 5.5 H13 M5.5 2 V13" stroke="#999" stroke-dasharray="1 1"/></svg>
<svg style="left:34px;top:113px;" width="16" height="911" viewBox="0 0 16 911"><path d="M13.5 3.5 H16" stroke="#b0b0b0"/><path d="M13.5 7.5 H16" stroke="#b0b0b0"/><path d="M13.5 12.5 H16" stroke="#b0b0b0"/><path d="M13.5 16.5 H16" stroke="#b0b0b0"/><path d="M1 20.5 H16" stroke="#d8d8d8"/><text x="2.5" y="29.0" font-size="9" fill="#e0e0e0" font-family="Liberation Sans">2</text><text x="2.5" y="37.0" font-size="9" fill="#e0e0e0" font-family="Liberation Sans">0</text><path d="M13.5 24.5 H16" stroke="#b0b0b0"/><path d="M13.5 28.5 H16" stroke="#b0b0b0"/><path d="M13.5 33.5 H16" stroke="#b0b0b0"/><path d="M13.5 37.5 H16" stroke="#b0b0b0"/><path d="M11 41.5 H16" stroke="#c8c8c8"/><path d="M13.5 45.5 H16" stroke="#b0b0b0"/><path d="M13.5 49.5 H16" stroke="#b0b0b0"/><path d="M13.5 54.5 H16" stroke="#b0b0b0"/><path d="M13.5 58.5 H16" stroke="#b0b0b0"/><path d="M1 62.5 H16" stroke="#d8d8d8"/><text x="2.5" y="71.0" font-size="9" fill="#e0e0e0" font-family="Liberation Sans">1</text><text x="2.5" y="79.0" font-size="9" fill="#e0e0e0" font-family="Liberation Sans">0</text><path d="M13.5 66.5 H16" stroke="#b0b0b0"/><path d="M13.5 70.5 H16" stroke="#b0b0b0"/><path d="M13.5 75.5 H16" stroke="#b0b0b0"/><path d="M13.5 79.5 H16" stroke="#b0b0b0"/><path d="M11 83.5 H16" stroke="#c8c8c8"/><path d="M13.5 87.5 H16" stroke="#b0b0b0"/><path d="M13.5 91.5 H16" stroke="#b0b0b0"/><path d="M13.5 96.5 H16" stroke="#b0b0b0"/><path d="M13.5 100.5 H16" stroke="#b0b0b0"/><path d="M1 104.5 H16" stroke="#d8d8d8"/><text x="2.5" y="113.0" font-size="9" fill="#e0e0e0" font-family="Liberation Sans">0</text><path d="M13.5 108.5 H16" stroke="#b0b0b0"/><path d="M13.5 112.5 H16" stroke="#b0b0b0"/><path d="M13.5 117.5 H16" stroke="#b0b0b0"/><path d="M13.5 121.5 H16" stroke="#b0b0b0"/><path d="M11 125.5 H16" stroke="#c8c8c8"/><path d="M13.5 129.5 H16" stroke="#b0b0b0"/><path d="M13.5 133.5 H16" stroke="#b0b0b0"/><path d="M13.5 138.5 H16" stroke="#b0b0b0"/><path d="M13.5 142.5 H16" stroke="#b0b0b0"/><path d="M1 146.5 H16" stroke="#d8d8d8"/><text x="2.5" y="155.0" font-size="9" fill="#e0e0e0" font-family="Liberation Sans">1</text><text x="2.5" y="163.0" font-size="9" fill="#e0e0e0" font-family="Liberation Sans">0</text><path d="M13.5 150.5 H16" stroke="#b0b0b0"/><path d="M13.5 154.5 H16" stroke="#b0b0b0"/><path d="M13.5 159.5 H16" stroke="#b0b0b0"/><path d="M13.5 163.5 H16" stroke="#b0b0b0"/><path d="M11 167.5 H16" stroke="#c8c8c8"/><path d="M13.5 171.5 H16" stroke="#b0b0b0"/><path d="M13.5 175.5 H16" stroke="#b0b0b0"/><path d="M13.5 180.5 H16" stroke="#b0b0b0"/><path d="M13.5 184.5 H16" stroke="#b0b0b0"/><path d="M1 188.5 H16" stroke="#d8d8d8"/><text x="2.5" y="197.0" font-size="9" fill="#e0e0e0" font-family="Liberation Sans">2</text><text x="2.5" y="205.0" font-size="9" fill="#e0e0e0" font-family="Liberation Sans">0</text><path d="M13.5 192.5 H16" stroke="#b0b0b0"/><path d="M13.5 196.5 H16" stroke="#b0b0b0"/><path d="M13.5 201.5 H16" stroke="#b0b0b0"/><path d="M13.5 205.5 H16" stroke="#b0b0b0"/><path d="M11 209.5 H16" stroke="#c8c8c8"/><path d="M13.5 213.5 H16" stroke="#b0b0b0"/><path d="M13.5 217.5 H16" stroke="#b0b0b0"/><path d="M13.5 222.5 H16" stroke="#b0b0b0"/><path d="M13.5 226.5 H16" stroke="#b0b0b0"/><path d="M1 230.5 H16" stroke="#d8d8d8"/><text x="2.5" y="239.0" font-size="9" fill="#e0e0e0" font-family="Liberation Sans">3</text><text x="2.5" y="247.0" font-size="9" fill="#e0e0e0" font-family="Liberation Sans">0</text><path d="M13.5 234.5 H16" stroke="#b0b0b0"/><path d="M13.5 238.5 H16" stroke="#b0b0b0"/><path d="M13.5 243.5 H16" stroke="#b0b0b0"/><path d="M13.5 247.5 H16" stroke="#b0b0b0"/><path d="M11 251.5 H16" stroke="#c8c8c8"/><path d="M13.5 255.5 H16" stroke="#b0b0b0"/><path d="M13.5 259.5 H16" stroke="#b0b0b0"/><path d="M13.5 264.5 H16" stroke="#b0b0b0"/><path d="M13.5 268.5 H16" stroke="#b0b0b0"/><path d="M1 272.5 H16" stroke="#d8d8d8"/><text x="2.5" y="281.0" font-size="9" fill="#e0e0e0" font-family="Liberation Sans">4</text><text x="2.5" y="289.0" font-size="9" fill="#e0e0e0" font-family="Liberation Sans">0</text><path d="M13.5 276.5 H16" stroke="#b0b0b0"/><path d="M13.5 280.5 H16" stroke="#b0b0b0"/><path d="M13.5 285.5 H16" stroke="#b0b0b0"/><path d="M13.5 289.5 H16" stroke="#b0b0b0"/><path d="M11 293.5 H16" stroke="#c8c8c8"/><path d="M13.5 297.5 H16" stroke="#b0b0b0"/><path d="M13.5 301.5 H16" stroke="#b0b0b0"/><path d="M13.5 306.5 H16" stroke="#b0b0b0"/><path d="M13.5 310.5 H16" stroke="#b0b0b0"/><path d="M1 314.5 H16" stroke="#d8d8d8"/><text x="2.5" y="323.0" font-size="9" fill="#e0e0e0" font-family="Liberation Sans">5</text><text x="2.5" y="331.0" font-size="9" fill="#e0e0e0" font-family="Liberation Sans">0</text><path d="M13.5 318.5 H16" stroke="#b0b0b0"/><path d="M13.5 322.5 H16" stroke="#b0b0b0"/><path d="M13.5 327.5 H16" stroke="#b0b0b0"/><path d="M13.5 331.5 H16" stroke="#b0b0b0"/><path d="M11 335.5 H16" stroke="#c8c8c8"/><path d="M13.5 339.5 H16" stroke="#b0b0b0"/><path d="M13.5 343.5 H16" stroke="#b0b0b0"/><path d="M13.5 348.5 H16" stroke="#b0b0b0"/><path d="M13.5 352.5 H16" stroke="#b0b0b0"/><path d="M1 356.5 H16" stroke="#d8d8d8"/><text x="2.5" y="365.0" font-size="9" fill="#e0e0e0" font-family="Liberation Sans">6</text><text x="2.5" y="373.0" font-size="9" fill="#e0e0e0" font-family="Liberation Sans">0</text><path d="M13.5 360.5 H16" stroke="#b0b0b0"/><path d="M13.5 364.5 H16" stroke="#b0b0b0"/><path d="M13.5 369.5 H16" stroke="#b0b0b0"/><path d="M13.5 373.5 H16" stroke="#b0b0b0"/><path d="M11 377.5 H16" stroke="#c8c8c8"/><path d="M13.5 381.5 H16" stroke="#b0b0b0"/><path d="M13.5 385.5 H16" stroke="#b0b0b0"/><path d="M13.5 390.5 H16" stroke="#b0b0b0"/><path d="M13.5 394.5 H16" stroke="#b0b0b0"/><path d="M1 398.5 H16" stroke="#d8d8d8"/><text x="2.5" y="407.0" font-size="9" fill="#e0e0e0" font-family="Liberation Sans">7</text><text x="2.5" y="415.0" font-size="9" fill="#e0e0e0" font-family="Liberation Sans">0</text><path d="M13.5 402.5 H16" stroke="#b0b0b0"/><path d="M13.5 406.5 H16" stroke="#b0b0b0"/><path d="M13.5 411.5 H16" stroke="#b0b0b0"/><path d="M13.5 415.5 H16" stroke="#b0b0b0"/><path d="M11 419.5 H16" stroke="#c8c8c8"/><path d="M13.5 423.5 H16" stroke="#b0b0b0"/><path d="M13.5 427.5 H16" stroke="#b0b0b0"/><path d="M13.5 432.5 H16" stroke="#b0b0b0"/><path d="M13.5 436.5 H16" stroke="#b0b0b0"/><path d="M1 440.5 H16" stroke="#d8d8d8"/><text x="2.5" y="449.0" font-size="9" fill="#e0e0e0" font-family="Liberation Sans">8</text><text x="2.5" y="457.0" font-size="9" fill="#e0e0e0" font-family="Liberation Sans">0</text><path d="M13.5 444.5 H16" stroke="#b0b0b0"/><path d="M13.5 448.5 H16" stroke="#b0b0b0"/><path d="M13.5 453.5 H16" stroke="#b0b0b0"/><path d="M13.5 457.5 H16" stroke="#b0b0b0"/><path d="M11 461.5 H16" stroke="#c8c8c8"/><path d="M13.5 465.5 H16" stroke="#b0b0b0"/><path d="M13.5 469.5 H16" stroke="#b0b0b0"/><path d="M13.5 474.5 H16" stroke="#b0b0b0"/><path d="M13.5 478.5 H16" stroke="#b0b0b0"/><path d="M1 482.5 H16" stroke="#d8d8d8"/><text x="2.5" y="491.0" font-size="9" fill="#e0e0e0" font-family="Liberation Sans">9</text><text x="2.5" y="499.0" font-size="9" fill="#e0e0e0" font-family="Liberation Sans">0</text><path d="M13.5 486.5 H16" stroke="#b0b0b0"/><path d="M13.5 490.5 H16" stroke="#b0b0b0"/><path d="M13.5 495.5 H16" stroke="#b0b0b0"/><path d="M13.5 499.5 H16" stroke="#b0b0b0"/><path d="M11 503.5 H16" stroke="#c8c8c8"/><path d="M13.5 507.5 H16" stroke="#b0b0b0"/><path d="M13.5 511.5 H16" stroke="#b0b0b0"/><path d="M13.5 516.5 H16" stroke="#b0b0b0"/><path d="M13.5 520.5 H16" stroke="#b0b0b0"/><path d="M1 524.5 H16" stroke="#d8d8d8"/><text x="2.5" y="533.0" font-size="9" fill="#e0e0e0" font-family="Liberation Sans">1</text><text x="2.5" y="541.0" font-size="9" fill="#e0e0e0" font-family="Liberation Sans">0</text><text x="2.5" y="549.0" font-size="9" fill="#e0e0e0" font-family="Liberation Sans">0</text><path d="M13.5 528.5 H16" stroke="#b0b0b0"/><path d="M13.5 532.5 H16" stroke="#b0b0b0"/><path d="M13.5 537.5 H16" stroke="#b0b0b0"/><path d="M13.5 541.5 H16" stroke="#b0b0b0"/><path d="M11 545.5 H16" stroke="#c8c8c8"/><path d="M13.5 549.5 H16" stroke="#b0b0b0"/><path d="M13.5 553.5 H16" stroke="#b0b0b0"/><path d="M13.5 558.5 H16" stroke="#b0b0b0"/><path d="M13.5 562.5 H16" stroke="#b0b0b0"/><path d="M1 566.5 H16" stroke="#d8d8d8"/><text x="2.5" y="575.0" font-size="9" fill="#e0e0e0" font-family="Liberation Sans">1</text><text x="2.5" y="583.0" font-size="9" fill="#e0e0e0" font-family="Liberation Sans">1</text><text x="2.5" y="591.0" font-size="9" fill="#e0e0e0" font-family="Liberation Sans">0</text><path d="M13.5 570.5 H16" stroke="#b0b0b0"/><path d="M13.5 574.5 H16" stroke="#b0b0b0"/><path d="M13.5 579.5 H16" stroke="#b0b0b0"/><path d="M13.5 583.5 H16" stroke="#b0b0b0"/><path d="M11 587.5 H16" stroke="#c8c8c8"/><path d="M13.5 591.5 H16" stroke="#b0b0b0"/><path d="M13.5 595.5 H16" stroke="#b0b0b0"/><path d="M13.5 600.5 H16" stroke="#b0b0b0"/><path d="M13.5 604.5 H16" stroke="#b0b0b0"/><path d="M1 608.5 H16" stroke="#d8d8d8"/><text x="2.5" y="617.0" font-size="9" fill="#e0e0e0" font-family="Liberation Sans">1</text><text x="2.5" y="625.0" font-size="9" fill="#e0e0e0" font-family="Liberation Sans">2</text><text x="2.5" y="633.0" font-size="9" fill="#e0e0e0" font-family="Liberation Sans">0</text><path d="M13.5 612.5 H16" stroke="#b0b0b0"/><path d="M13.5 616.5 H16" stroke="#b0b0b0"/><path d="M13.5 621.5 H16" stroke="#b0b0b0"/><path d="M13.5 625.5 H16" stroke="#b0b0b0"/><path d="M11 629.5 H16" stroke="#c8c8c8"/><path d="M13.5 633.5 H16" stroke="#b0b0b0"/><path d="M13.5 637.5 H16" stroke="#b0b0b0"/><path d="M13.5 642.5 H16" stroke="#b0b0b0"/><path d="M13.5 646.5 H16" stroke="#b0b0b0"/><path d="M1 650.5 H16" stroke="#d8d8d8"/><text x="2.5" y="659.0" font-size="9" fill="#e0e0e0" font-family="Liberation Sans">1</text><text x="2.5" y="667.0" font-size="9" fill="#e0e0e0" font-family="Liberation Sans">3</text><text x="2.5" y="675.0" font-size="9" fill="#e0e0e0" font-family="Liberation Sans">0</text><path d="M13.5 654.5 H16" stroke="#b0b0b0"/><path d="M13.5 658.5 H16" stroke="#b0b0b0"/><path d="M13.5 663.5 H16" stroke="#b0b0b0"/><path d="M13.5 667.5 H16" stroke="#b0b0b0"/><path d="M11 671.5 H16" stroke="#c8c8c8"/><path d="M13.5 675.5 H16" stroke="#b0b0b0"/><path d="M13.5 679.5 H16" stroke="#b0b0b0"/><path d="M13.5 684.5 H16" stroke="#b0b0b0"/><path d="M13.5 688.5 H16" stroke="#b0b0b0"/><path d="M1 692.5 H16" stroke="#d8d8d8"/><text x="2.5" y="701.0" font-size="9" fill="#e0e0e0" font-family="Liberation Sans">1</text><text x="2.5" y="709.0" font-size="9" fill="#e0e0e0" font-family="Liberation Sans">4</text><text x="2.5" y="717.0" font-size="9" fill="#e0e0e0" font-family="Liberation Sans">0</text><path d="M13.5 696.5 H16" stroke="#b0b0b0"/><path d="M13.5 700.5 H16" stroke="#b0b0b0"/><path d="M13.5 705.5 H16" stroke="#b0b0b0"/><path d="M13.5 709.5 H16" stroke="#b0b0b0"/><path d="M11 713.5 H16" stroke="#c8c8c8"/><path d="M13.5 717.5 H16" stroke="#b0b0b0"/><path d="M13.5 721.5 H16" stroke="#b0b0b0"/><path d="M13.5 726.5 H16" stroke="#b0b0b0"/><path d="M13.5 730.5 H16" stroke="#b0b0b0"/><path d="M1 734.5 H16" stroke="#d8d8d8"/><text x="2.5" y="743.0" font-size="9" fill="#e0e0e0" font-family="Liberation Sans">1</text><text x="2.5" y="751.0" font-size="9" fill="#e0e0e0" font-family="Liberation Sans">5</text><text x="2.5" y="759.0" font-size="9" fill="#e0e0e0" font-family="Liberation Sans">0</text><path d="M13.5 738.5 H16" stroke="#b0b0b0"/><path d="M13.5 742.5 H16" stroke="#b0b0b0"/><path d="M13.5 747.5 H16" stroke="#b0b0b0"/><path d="M13.5 751.5 H16" stroke="#b0b0b0"/><path d="M11 755.5 H16" stroke="#c8c8c8"/><path d="M13.5 759.5 H16" stroke="#b0b0b0"/><path d="M13.5 763.5 H16" stroke="#b0b0b0"/><path d="M13.5 768.5 H16" stroke="#b0b0b0"/><path d="M13.5 772.5 H16" stroke="#b0b0b0"/><path d="M1 776.5 H16" stroke="#d8d8d8"/><text x="2.5" y="785.0" font-size="9" fill="#e0e0e0" font-family="Liberation Sans">1</text><text x="2.5" y="793.0" font-size="9" fill="#e0e0e0" font-family="Liberation Sans">6</text><text x="2.5" y="801.0" font-size="9" fill="#e0e0e0" font-family="Liberation Sans">0</text><path d="M13.5 780.5 H16" stroke="#b0b0b0"/><path d="M13.5 784.5 H16" stroke="#b0b0b0"/><path d="M13.5 789.5 H16" stroke="#b0b0b0"/><path d="M13.5 793.5 H16" stroke="#b0b0b0"/><path d="M11 797.5 H16" stroke="#c8c8c8"/><path d="M13.5 801.5 H16" stroke="#b0b0b0"/><path d="M13.5 805.5 H16" stroke="#b0b0b0"/><path d="M13.5 810.5 H16" stroke="#b0b0b0"/><path d="M13.5 814.5 H16" stroke="#b0b0b0"/><path d="M1 818.5 H16" stroke="#d8d8d8"/><text x="2.5" y="827.0" font-size="9" fill="#e0e0e0" font-family="Liberation Sans">1</text><text x="2.5" y="835.0" font-size="9" fill="#e0e0e0" font-family="Liberation Sans">7</text><text x="2.5" y="843.0" font-size="9" fill="#e0e0e0" font-family="Liberation Sans">0</text><path d="M13.5 822.5 H16" stroke="#b0b0b0"/><path d="M13.5 826.5 H16" stroke="#b0b0b0"/><path d="M13.5 831.5 H16" stroke="#b0b0b0"/><path d="M13.5 835.5 H16" stroke="#b0b0b0"/><path d="M11 839.5 H16" stroke="#c8c8c8"/><path d="M13.5 843.5 H16" stroke="#b0b0b0"/><path d="M13.5 847.5 H16" stroke="#b0b0b0"/><path d="M13.5 852.5 H16" stroke="#b0b0b0"/><path d="M13.5 856.5 H16" stroke="#b0b0b0"/><path d="M1 860.5 H16" stroke="#d8d8d8"/><text x="2.5" y="869.0" font-size="9" fill="#e0e0e0" font-family="Liberation Sans">1</text><text x="2.5" y="877.0" font-size="9" fill="#e0e0e0" font-family="Liberation Sans">8</text><text x="2.5" y="885.0" font-size="9" fill="#e0e0e0" font-family="Liberation Sans">0</text><path d="M13.5 864.5 H16" stroke="#b0b0b0"/><path d="M13.5 868.5 H16" stroke="#b0b0b0"/><path d="M13.5 873.5 H16" stroke="#b0b0b0"/><path d="M13.5 877.5 H16" stroke="#b0b0b0"/><path d="M11 881.5 H16" stroke="#c8c8c8"/><path d="M13.5 885.5 H16" stroke="#b0b0b0"/><path d="M13.5 889.5 H16" stroke="#b0b0b0"/><path d="M13.5 894.5 H16" stroke="#b0b0b0"/><path d="M13.5 898.5 H16" stroke="#b0b0b0"/><path d="M1 902.5 H16" stroke="#d8d8d8"/><text x="2.5" y="911.0" font-size="9" fill="#e0e0e0" font-family="Liberation Sans">1</text><text x="2.5" y="919.0" font-size="9" fill="#e0e0e0" font-family="Liberation Sans">9</text><text x="2.5" y="927.0" font-size="9" fill="#e0e0e0" font-family="Liberation Sans">0</text><path d="M13.5 906.5 H16" stroke="#b0b0b0"/><path d="M13.5 910.5 H16" stroke="#b0b0b0"/><path d="M15.5 0 V911" stroke="#bdbdbd"/></svg>
<div style="left:1718px;top:684px;width:20px;height:340px;background:#5e5e5e;"></div>
<div style="left:821px;top:209px;width:897px;height:1px;background:#e0484a;"></div>
<div style="left:821px;top:209px;width:1px;height:815px;background:#e0484a;"></div>
<div style="left:1717px;top:209px;width:1px;height:815px;background:#e0484a;"></div>
<div style="left:828px;top:217px;width:882px;height:1px;background:#111;"></div>
<div style="left:828px;top:217px;width:1px;height:807px;background:#111;"></div>
<div style="left:1709px;top:217px;width:1px;height:807px;background:#111;"></div>
<div style="left:841px;top:230px;width:856px;height:1px;background:#e060d8;"></div>
<div style="left:841px;top:230px;width:1px;height:794px;background:#9a5ad0;"></div>
<div style="left:1696px;top:230px;width:1px;height:794px;background:#9a5ad0;"></div>
<div style="left:1269px;top:217px;width:1px;height:807px;background:#3ecfd8;"></div>
<svg style="left:950px;top:230px;" width="200" height="45" viewBox="0 0 1920 432"><g fill="none" stroke="#a83224" stroke-width="16" stroke-linecap="round" stroke-linejoin="round"><path d="M365 115 C330 92 250 120 205 200 C170 265 175 322 225 322 C290 322 400 210 548 68"/><path d="M548 68 C520 140 482 230 462 298"/><path d="M375 205 C430 188 480 186 535 180"/><path d="M520 290 C565 250 620 150 625 98 C625 80 610 86 600 112 C580 172 560 250 560 288 C575 292 590 275 600 262"/><path d="M600 262 C640 220 685 140 690 98 C690 80 675 90 665 116 C645 180 625 250 618 292"/><path d="M635 235 C680 190 725 196 702 226 C690 240 662 242 650 238 C690 246 685 292 725 282 C740 278 750 265 760 252"/><path d="M815 215 C785 198 748 240 756 275 C766 302 812 282 822 242 C827 215 812 204 800 214"/><path d="M822 238 C842 242 860 232 880 215"/><path d="M850 292 C895 240 950 140 955 98 C955 80 940 90 930 116 C910 180 890 250 883 292"/><path d="M893 252 C930 205 978 200 966 240 C960 265 950 292 976 286 C992 282 1002 270 1012 255"/><path d="M1080 215 C1050 198 1013 240 1021 275 C1031 302 1077 282 1087 242 C1092 215 1077 204 1065 214"/><path d="M1087 238 C1100 242 1112 236 1122 226"/><path d="M1092 290 C1128 245 1166 150 1171 102 C1171 85 1156 92 1146 116 C1126 180 1108 250 1106 290"/><path d="M1106 290 C1160 250 1250 150 1256 106 C1256 90 1241 96 1231 122 C1200 200 1162 300 1130 336 C1110 356 1062 352 1060 334"/><path d="M1150 238 C1200 226 1240 222 1292 218"/><path d="M1292 218 C1282 204 1264 214 1274 228 C1296 240 1312 226 1302 250 C1290 276 1296 296 1326 280 C1342 272 1352 260 1362 250"/><path d="M1362 256 C1402 246 1424 210 1397 208 C1366 208 1346 260 1366 282 C1386 298 1432 276 1456 246"/><path d="M1456 246 C1470 226 1478 212 1481 206 C1466 246 1456 286 1481 286 C1501 284 1516 266 1531 250"/><path d="M1531 256 C1571 246 1593 210 1566 208 C1535 208 1515 260 1535 282 C1555 298 1601 276 1625 246"/><path d="M1625 246 C1650 220 1680 182 1690 166 C1680 200 1722 232 1702 266 C1686 292 1640 290 1620 270"/><path d="M1702 264 C1722 254 1736 240 1746 224"/><circle cx="1508" cy="162" r="9" fill="#a83224" stroke="none"/></g></svg>
<svg style="left:950px;top:360px;" width="200" height="45" viewBox="0 0 1920 432"><g fill="none" stroke="#a83224" stroke-width="16" stroke-linecap="round" stroke-linejoin="round"><path d="M412 85 C380 150 332 250 290 292"/><path d="M240 152 C230 110 290 70 400 65 C482 62 512 100 472 146 C442 176 380 186 345 186"/><path d="M345 186 C422 180 452 210 432 250 C406 296 300 316 250 290 C214 270 224 216 246 205"/><path d="M246 205 C214 226 194 270 210 290 C226 300 240 280 246 260"/><path d="M470 262 C512 252 542 216 516 208 C485 205 455 256 475 282 C496 300 546 280 576 246"/><path d="M576 246 C600 220 626 186 636 170 C626 206 666 236 646 268 C630 292 586 290 570 272"/><path d="M648 262 C670 250 690 238 705 225"/><path d="M762 226 C752 205 716 210 700 246 C688 280 716 296 746 280 C766 270 780 256 790 246"/><path d="M780 292 C822 240 880 140 886 102 C886 85 870 92 860 118 C840 180 820 250 815 292"/><path d="M825 252 C860 205 906 200 896 240 C890 265 880 292 906 286 C922 282 936 266 946 250"/><path d="M946 250 C960 226 970 212 976 208 C960 246 946 286 970 286 C1000 282 1030 240 1046 210 C1030 250 1020 286 1046 286 C1080 280 1110 236 1106 205 C1110 226 1130 230 1150 222"/><path d="M1150 222 C1140 246 1126 286 1150 286 C1170 284 1186 266 1200 250"/><path d="M1200 250 C1216 230 1226 216 1231 205 C1200 270 1160 340 1120 346 C1104 346 1110 330 1120 320"/><path d="M1216 240 C1246 205 1292 205 1286 240 C1280 276 1230 300 1206 276"/><path d="M1292 246 C1316 220 1340 186 1350 170 C1340 206 1382 236 1362 268 C1346 292 1300 290 1286 272"/><path d="M1362 264 C1386 250 1400 240 1416 225"/><path d="M1472 120 C1450 170 1420 250 1430 280 C1440 296 1470 280 1500 252"/><path d="M1395 202 C1430 196 1470 193 1512 190"/><path d="M1500 260 C1542 250 1572 216 1546 208 C1515 205 1485 256 1505 282 C1526 300 1576 280 1606 246"/><path d="M1606 246 C1630 220 1656 186 1666 170 C1656 206 1696 236 1676 268 C1660 292 1616 290 1600 272"/><path d="M1678 264 C1696 252 1706 240 1716 225"/><circle cx="1142" cy="160" r="9" fill="#a83224" stroke="none"/></g></svg>
<div style="left:709px;width:300px;text-align:right;top:267px;height:20px;line-height:20px;font-size:17.5px;color:#7fb5ad;white-space:nowrap;font-weight:bold;font-family:'Liberation Serif',serif;letter-spacing:1.65px;">Mineralwasser</div>
<div style="left:799px;width:300px;text-align:right;top:291px;height:20px;line-height:20px;font-size:17.5px;color:#7fb5ad;white-space:nowrap;font-weight:bold;font-family:'Liberation Serif',serif;letter-spacing:1.65px;">Verschiedene Limonaden</div>
<div style="left:700px;width:300px;text-align:right;top:315px;height:20px;line-height:20px;font-size:17.5px;color:#7fb5ad;white-space:nowrap;font-weight:bold;font-family:'Liberation Serif',serif;letter-spacing:1.65px;">Diverse Säfte</div>
<div style="left:784px;width:300px;text-align:right;top:397px;height:20px;line-height:20px;font-size:17.5px;color:#7fb5ad;white-space:nowrap;font-weight:bold;font-family:'Liberation Serif',serif;letter-spacing:1.65px;">Frisches Pils vom Fass</div>
<div style="left:730px;width:300px;text-align:right;top:421px;height:20px;line-height:20px;font-size:17.5px;color:#7fb5ad;white-space:nowrap;font-weight:bold;font-family:'Liberation Serif',serif;letter-spacing:1.65px;">Riesling, trocken</div>
<div style="left:34px;top:1024px;width:324px;height:17px;background:#474747;"></div>
<div style="left:358px;top:1024px;width:1358px;height:14px;background:#2e2e2e;"></div>
<div style="left:433px;top:1025px;width:835px;height:12px;background:#707070;"></div>
<div style="left:1716px;top:1024px;width:38px;height:17px;background:#3a3a3a;"></div>
<div style="left:0px;top:1038px;width:1920px;height:3px;background:#1c232b;"></div>
<svg style="left:50px;top:1027px;" width="22" height="11" viewBox="0 0 22 11"><rect x="0.5" y="0.5" width="20" height="10" rx="2" fill="#8a8a8a" stroke="#999"/><circle cx="6" cy="5.5" r="2.5" fill="none" stroke="#444" stroke-width="1.3"/><path d="M12 3 H14 V7 H12Z M16 3 H18 V7 H16Z" fill="#444"/></svg>
<svg style="left:79px;top:1028px;" width="8" height="10" viewBox="0 0 8 10"><path d="M1 0 V10" stroke="#ddd" stroke-width="1.4"/><path d="M8 0 L2.5 5 L8 10Z" fill="#ddd"/></svg>
<svg style="left:93px;top:1028px;" width="6" height="10" viewBox="0 0 6 10"><path d="M6 0 L0.5 5 L6 10Z" fill="#ddd"/></svg>
<div style="left:108px;top:1022px;height:20px;line-height:20px;font-size:10px;color:#e0e0e0;white-space:nowrap;">2</div>
<svg style="left:189px;top:1030px;" width="8" height="6" viewBox="0 0 8 6"><path d="M0 0 H8 L4 5.5Z" fill="#ddd"/></svg>
<svg style="left:209px;top:1028px;" width="6" height="10" viewBox="0 0 6 10"><path d="M0 0 L5.5 5 L0 10Z" fill="#7a7a7a"/></svg>
<svg style="left:221px;top:1028px;" width="8" height="10" viewBox="0 0 8 10"><path d="M7 0 V10" stroke="#7a7a7a" stroke-width="1.4"/><path d="M0 0 L5.5 5 L0 10Z" fill="#7a7a7a"/></svg>
<svg style="left:237px;top:1026px;" width="17" height="13" viewBox="0 0 17 13"><circle cx="6.5" cy="6.5" r="6" fill="none" stroke="#ddd" stroke-width="1.3"/><path d="M4 3 H8 L9.5 4.5 V10 H4Z" fill="#474747" stroke="#eee" stroke-width="1.1"/><path d="M13 10 H16.5 L14.7 12Z" fill="#ddd"/></svg>
<div style="left:262px;top:1027px;width:11px;height:11px;background:#4fc02f;border-radius:6px;"></div>
<div style="left:277px;top:1022px;height:20px;line-height:20px;font-size:10px;color:#e0e0e0;white-space:nowrap;letter-spacing:-0.3px;">Ohne Fehler</div>
<svg style="left:347px;top:1031px;" width="8" height="5" viewBox="0 0 8 5"><path d="M0.5 0.5 L6.5 0.5 L3.5 4Z" fill="#ddd"/></svg>
<svg style="left:363px;top:1027px;" width="7" height="10" viewBox="0 0 7 10"><path d="M6.5 0 L0.5 5 L6.5 10Z" fill="#eee"/></svg>
<svg style="left:1703px;top:1027px;" width="7" height="10" viewBox="0 0 7 10"><path d="M0.5 0 L6.5 5 L0.5 10Z" fill="#eee"/></svg>
<svg style="left:1719px;top:1026px;" width="16" height="12" viewBox="0 0 16 12"><rect x="0.5" y="0.5" width="15" height="11" fill="#333" stroke="#ddd"/><path d="M8 0 V12" stroke="#ddd"/></svg>
<div style="left:1738px;top:684px;width:15px;height:340px;background:#333;"></div>
<div style="left:1739px;top:684px;width:13px;height:235px;background:#8b8b8b;"></div>
<svg style="left:1741px;top:1014px;" width="9" height="7" viewBox="0 0 9 7"><path d="M0 0 H9 L4.5 6.5Z" fill="#e8e8e8"/></svg>
<div style="left:0px;top:78px;width:1px;height:963px;background:#2a2a2a;"></div>
<div style="left:0px;top:90px;width:32px;height:8px;background:#474747;"></div>
<div style="left:6px;top:93px;width:20px;height:4px;background:repeating-linear-gradient(90deg,#1e1e1e 0 1px,transparent 1px 2px);"></div>
<div style="left:4px;top:106px;width:24px;height:21px;background:#2e2e2e;border:1px solid #262626;border-radius:2px;"></div>
<svg style="left:10px;top:108px;" width="12" height="17" viewBox="0 0 12 17"><path d="M1 0.8 L1 12.5 L4 9.8 L6.3 15 L8.4 14 L6.2 9 L10 9Z" fill="#2e2e2e" stroke="#d6d6d6" stroke-width="1.1"/></svg>
<svg style="left:11px;top:129px;" width="12" height="17" viewBox="0 0 12 17"><path d="M1 0.8 L1 12.5 L4 9.8 L6.3 15 L8.4 14 L6.2 9 L10 9Z" fill="#d6d6d6"/></svg>
<svg style="left:9px;top:151px;" width="16" height="16" viewBox="0 0 16 16"><path d="M1 0.5 H8 L11 3.5 V13.5 H1Z" fill="#cfcfcf"/><path d="M8 0.5 V3.5 H11" fill="none" stroke="#474747"/><path d="M10 6 L10 13 L12 11.3 L13.3 14.5 L14.5 14 L13.2 11 L15.5 11Z" fill="#d6d6d6" stroke="#474747" stroke-width="0.6"/></svg>
<svg style="left:5px;top:172px;" width="22" height="14" viewBox="0 0 22 14"><path d="M1 0 V14 M21 0 V14" stroke="#d6d6d6" stroke-width="1.6"/><path d="M5 7 H17" stroke="#d6d6d6" stroke-width="1.6"/><path d="M8 3.5 L3.5 7 L8 10.5Z M14 3.5 L18.5 7 L14 10.5Z" fill="#d6d6d6"/></svg>
<svg style="left:8px;top:192px;" width="18" height="16" viewBox="0 0 18 16"><path d="M2 6.5 V14 H14 V6.5" fill="none" stroke="#d6d6d6" stroke-width="1.4"/><path d="M4 10 H12 M4 12 H12" stroke="#d6d6d6" stroke-dasharray="1.5 1"/><path d="M8 1 V7 M5 4.5 L8 8 L11 4.5" fill="none" stroke="#d6d6d6" stroke-width="1.4"/><path d="M17 15.5 L17 12.0 L13.5 15.5Z" fill="#d6d6d6"/></svg>
<div style="left:3px;top:213px;width:26px;height:1px;background:#383838;"></div>
<div style="left:-135px;width:300px;text-align:center;top:218px;height:20px;line-height:20px;font-size:20px;color:#d6d6d6;white-space:nowrap;font-family:'Liberation Serif',serif;">T</div>
<svg style="left:20px;top:233px;" width="6" height="6" viewBox="0 0 6 6"><path d="M5 5 L5 1.5 L1.5 5Z" fill="#d6d6d6"/></svg>
<svg style="left:8px;top:241px;" width="16" height="16" viewBox="0 0 16 16"><path d="M1 14.5 L14.5 1" stroke="#d6d6d6" stroke-width="1.4"/></svg>
<svg style="left:4px;top:261px;" width="24" height="18" viewBox="0 0 24 18"><path d="M0 3 H8" stroke="#d6d6d6" stroke-width="1.4"/><path d="M16 1 L22 5.5 L19.5 9 L13.5 4.5Z" fill="#d6d6d6"/><path d="M13 5.5 L18.5 9.8 L14 15 L6.5 16.5 L9 9.5Z" fill="#bdbdbd" stroke="#d6d6d6" stroke-width="0.8"/><circle cx="12.5" cy="11" r="1.2" fill="#474747"/><path d="M23 17 L23 13.5 L19.5 17Z" fill="#d6d6d6"/></svg>
<svg style="left:7px;top:283px;" width="20" height="17" viewBox="0 0 20 17"><path d="M12.5 1.5 L16 5 L6 15 L1.5 16 L2.5 11.5Z" fill="#bdbdbd" stroke="#d6d6d6" stroke-width="0.8"/><path d="M10.5 3.5 L14 7" stroke="#474747" stroke-width="1.2"/><path d="M19 16 L19 12.5 L15.5 16Z" fill="#d6d6d6"/></svg>
<svg style="left:8px;top:305px;" width="20" height="17" viewBox="0 0 20 17"><rect x="0.8" y="0.8" width="14" height="12.5" fill="#5e5e5e" stroke="#d6d6d6" stroke-width="1.4"/><path d="M1 1 L15 13.5 M15 1 L1 13.5" stroke="#d6d6d6" stroke-width="1"/><path d="M19 16 L19 12.5 L15.5 16Z" fill="#d6d6d6"/></svg>
<svg style="left:7px;top:326px;" width="20" height="16" viewBox="0 0 20 16"><ellipse cx="9" cy="7" rx="8" ry="6" fill="#8a8a8a" stroke="#d6d6d6" stroke-width="1.3"/><path d="M19 15.5 L19 12.0 L15.5 15.5Z" fill="#d6d6d6"/></svg>
<div style="left:3px;top:346px;width:26px;height:1px;background:#383838;"></div>
<svg style="left:7px;top:352px;" width="18" height="16" viewBox="0 0 18 16"><path d="M2 2 L14 12 M15 2 L5 11" stroke="#d6d6d6" stroke-width="1.5"/><circle cx="4" cy="12.5" r="2.3" fill="none" stroke="#d6d6d6" stroke-width="1.3"/><circle cx="14.5" cy="13" r="2.3" fill="none" stroke="#d6d6d6" stroke-width="1.3"/></svg>
<svg style="left:6px;top:373px;" width="22" height="17" viewBox="0 0 22 17"><rect x="4.5" y="3.5" width="13" height="10" fill="none" stroke="#d6d6d6" stroke-dasharray="2 1.5" stroke-width="1.2"/><path d="M1 0.5 L1 9 L3.3 7 L5 10.5 L6.5 9.8 L4.9 6.4 L7.5 6.4Z" fill="#d6d6d6"/><path d="M21 16.5 L21 13.0 L17.5 16.5Z" fill="#d6d6d6"/></svg>
<div style="left:8px;top:397px;width:17px;height:12px;background:linear-gradient(90deg,#2a2a2a,#e8e8e8);border:1px solid #e0e0e0;"></div>
<div style="left:8px;top:417px;width:17px;height:13px;background-image:conic-gradient(#bbb 25%,#777 0 50%,#bbb 0 75%,#777 0);background-size:4px 4px;"></div>
<div style="left:8px;top:417px;width:17px;height:13px;background:linear-gradient(#cfcfcf,rgba(120,120,120,0.2));"></div>
<div style="left:3px;top:437px;width:26px;height:1px;background:#383838;"></div>
<svg style="left:8px;top:445px;" width="18" height="16" viewBox="0 0 18 16"><path d="M0.5 0.5 H15.5 V10 L11 14.5 H0.5Z" fill="#bdbdbd" stroke="#d6d6d6"/><path d="M3 4 H13 M3 6.5 H13 M3 9 H9" stroke="#474747" stroke-width="1.2"/><path d="M11 14.5 V10 H15.5" fill="#474747" stroke="#d6d6d6" stroke-width="0.8"/></svg>
<svg style="left:8px;top:465px;" width="18" height="18" viewBox="0 0 18 18"><path d="M11 1 A2.6 2.6 0 0 1 15 5 L12.5 7.5 L9 4Z" fill="#d6d6d6"/><path d="M9.5 5.5 L12 8 L5 15 L2 15.5 L2.5 12.5Z" fill="#8a8a8a" stroke="#d6d6d6" stroke-width="1"/><path d="M8 3.5 L13.5 9" stroke="#d6d6d6" stroke-width="1.6"/><path d="M17.5 17 L17.5 13.5 L14.0 17Z" fill="#d6d6d6"/></svg>
<svg style="left:7px;top:486px;" width="18" height="18" viewBox="0 0 18 18"><path d="M4 10 V4.5 a1.1 1.1 0 0 1 2.2 0 V8 V2.5 a1.1 1.1 0 0 1 2.2 0 V8 V2 a1.1 1.1 0 0 1 2.2 0 V8.5 V4 a1.1 1.1 0 0 1 2.2 0 V12 C13 15 11.5 17 8.5 17 C5.5 17 4.5 15 2 11.5 C1 10 2.6 9 4 10.8Z" fill="#cfcfcf" stroke="#d6d6d6" stroke-width="0.9"/></svg>
<svg style="left:8px;top:507px;" width="18" height="18" viewBox="0 0 18 18"><circle cx="6.5" cy="6.5" r="5" fill="#777" stroke="#d6d6d6" stroke-width="1.6"/><path d="M10 10 L15.5 15.5" stroke="#d6d6d6" stroke-width="2.6" stroke-linecap="round"/></svg>
<div style="left:3px;top:529px;width:26px;height:1px;background:#383838;"></div>
<div style="left:15px;top:541px;width:10px;height:10px;background:#2c2c2c;border:2px solid #111;outline:1px solid #bbb;"></div>
<div style="left:6px;top:534px;width:12px;height:11px;background:#c22725;border:1px solid #d9605c;"></div>
<svg style="left:20px;top:532px;" width="8" height="8" viewBox="0 0 8 8"><path d="M1 2 H5.5 V7 M3 0.5 L1 2 L3 3.5 M4 5.5 L5.5 7 L7 5.5" fill="none" stroke="#d6d6d6" stroke-width="0.9"/></svg>
<svg style="left:5px;top:551px;" width="12" height="12" viewBox="0 0 12 12"><rect x="4.5" y="4.5" width="6" height="6" fill="#111" stroke="#ddd"/><rect x="0.5" y="0.5" width="6" height="6" fill="#fff" stroke="#ddd"/><path d="M1 6 L6 1" stroke="#d22" stroke-width="1.4"/></svg>
<div style="left:6px;top:568px;width:8px;height:9px;border:1px solid #e0e0e0;background:#474747;"></div>
<div style="left:-127px;width:300px;text-align:center;top:563px;height:20px;line-height:20px;font-size:12px;color:#e8e8e8;white-space:nowrap;font-weight:bold;font-family:'Liberation Serif',serif;">T</div>
<div style="left:3px;top:582px;width:26px;height:1px;background:#383838;"></div>
<div style="left:4px;top:584px;width:25px;height:24px;background:#2e2e2e;border:1px solid #262626;border-radius:2px;"></div>
<div style="left:10px;top:589px;width:13px;height:13px;background:#c22725;border:1px solid #e07a76;"></div>
<svg style="left:23px;top:599px;" width="6" height="6" viewBox="0 0 6 6"><path d="M5 5 L5 1.5 L1.5 5Z" fill="#d6d6d6"/></svg>
<div style="left:4px;top:612px;width:25px;height:22px;background:#2e2e2e;border:1px solid #262626;border-radius:2px;"></div>
<svg style="left:10px;top:617px;" width="16" height="14" viewBox="0 0 16 14"><rect x="0.5" y="0.5" width="12" height="11" fill="#2e2e2e" stroke="#d6d6d6" stroke-width="1.2"/><rect x="3" y="5" width="8" height="5" fill="#ddd"/><path d="M3 3 H8" stroke="#ddd"/><path d="M15.5 13.5 L15.5 10.0 L12.0 13.5Z" fill="#d6d6d6"/></svg>
<div style="left:1544px;top:78px;width:376px;height:12px;background:#2f2f2f;"></div>
<div style="left:1544px;top:88px;width:210px;height:597px;background:#2a2a2a;"></div>
<div style="left:1546px;top:90px;width:207px;height:594px;background:#474747;"></div>
<div style="left:1546px;top:90px;width:207px;height:18px;background:#343434;border-bottom:1px solid #2a2a2a;"></div>
<div style="left:1546px;top:90px;width:49px;height:19px;background:#474747;border-right:1px solid #2c2c2c;"></div>
<svg style="left:1550px;top:94px;" width="7" height="11" viewBox="0 0 7 11"><path d="M0.8 4 L3.5 1 L6.2 4 M0.8 7 L3.5 10 L6.2 7" fill="none" stroke="#ddd" stroke-width="1.1"/></svg>
<div style="left:1559px;top:89px;height:20px;line-height:20px;font-size:10.5px;color:#ececec;white-space:nowrap;font-weight:bold;">Seiten</div>
<div style="left:1602px;top:89px;height:20px;line-height:20px;font-size:10.5px;color:#9c9c9c;white-space:nowrap;font-weight:bold;letter-spacing:-0.2px;">Ebenen</div>
<div style="left:1642px;top:89px;height:20px;line-height:20px;font-size:10.5px;color:#9c9c9c;white-space:nowrap;font-weight:bold;letter-spacing:-0.1px;width:47px;overflow:hidden;">Verknüpfı</div>
<svg style="left:1712px;top:95px;" width="10" height="9" viewBox="0 0 10 9"><path d="M0.5 0.5 L4.5 4.5 L0.5 8.5Z M5.5 0.5 L9.5 4.5 L5.5 8.5Z" fill="#ddd"/></svg>
<div style="left:1727px;top:92px;width:1px;height:14px;background:#2a2a2a;"></div>
<div style="left:1728px;top:92px;width:1px;height:14px;background:#666;"></div>
<svg style="left:1734px;top:95px;" width="17" height="8" viewBox="0 0 17 8"><path d="M0 1.5 H5 L2.5 4.5Z" fill="#ddd"/><path d="M6 0.5 H16 M6 2.5 H16 M6 4.5 H16 M6 6.5 H16" stroke="#ddd"/></svg>
<div style="left:1549px;top:115px;height:20px;line-height:20px;font-size:9.5px;color:#dcdcdc;white-space:nowrap;letter-spacing:-0.3px;">[Ohne]</div>
<div style="left:1549px;top:145px;height:20px;line-height:20px;font-size:9.5px;color:#dcdcdc;white-space:nowrap;letter-spacing:-0.45px;">A-Mustervorlage</div>
<div style="left:1707px;top:112px;width:25px;height:25px;background:#fff;border:1px solid #ddd;"></div>
<div style="left:1707px;top:141px;width:25px;height:25px;background:#fbf3e6;border:1px solid #ddd;"></div>
<div style="left:1740px;top:109px;width:13px;height:154px;background:#3a3a3a;border-left:1px solid #333;"></div>
<svg style="left:1743px;top:113px;" width="8" height="6" viewBox="0 0 8 6"><path d="M0 6 L4 0.5 L8 6Z" fill="#666"/></svg>
<svg style="left:1743px;top:253px;" width="8" height="6" viewBox="0 0 8 6"><path d="M0 0 L4 5.5 L8 0Z" fill="#666"/></svg>
<div style="left:1546px;top:263px;width:207px;height:4px;background:#3a3a3a;border-top:1px solid #333;border-bottom:1px solid #555;"></div>
<div style="left:1740px;top:267px;width:13px;height:389px;background:#3a3a3a;border-left:1px solid #333;"></div>
<svg style="left:1743px;top:272px;" width="8" height="6" viewBox="0 0 8 6"><path d="M0 6 L4 0.5 L8 6Z" fill="#666"/></svg>
<svg style="left:1743px;top:645px;" width="8" height="6" viewBox="0 0 8 6"><path d="M0 0 L4 5.5 L8 0Z" fill="#666"/></svg>
<svg style="left:1575px;top:269px;" width="10" height="5" viewBox="0 0 10 5"><path d="M0 0 H10 L5 4.5Z" fill="#777"/></svg>
<div style="left:1562px;top:275px;width:37px;height:36px;background:#f8f5e6;border:1px solid #e8e8e8;"></div>
<div style="left:1565px;top:284px;width:8px;height:2px;background:#999;"></div>
<div style="left:1581px;top:282px;width:16px;height:4px;background:#b33a2a;"></div>
<div style="left:1576px;top:289px;width:12px;height:12px;background:#cfe4de;border-radius:6px;"></div>
<div style="left:1566px;top:303px;width:8px;height:3px;background:#999;"></div>
<div style="left:1584px;top:303px;width:9px;height:3px;background:#999;"></div>
<div style="left:1577px;top:270px;height:20px;line-height:20px;font-size:8px;color:#111;white-space:nowrap;font-weight:bold;">A</div>
<div style="left:1429px;width:300px;text-align:center;top:313px;height:20px;line-height:20px;font-size:9px;color:#ccc;white-space:nowrap;">1</div>
<div style="left:1562px;top:339px;width:37px;height:36px;background:linear-gradient(#a6a9ae,#9c9ea2);border:1px solid #b0b3b8;"></div>
<div style="left:1574px;top:339px;width:11px;height:10px;background:#fff;"></div>
<div style="left:1576px;top:334px;height:20px;line-height:20px;font-size:9px;color:#000;white-space:nowrap;font-weight:bold;">A</div>
<div style="left:1573px;top:380px;width:12px;height:13px;background:#3a4356;border-radius:2px;"></div>
<div style="left:1429px;width:300px;text-align:center;top:376px;height:20px;line-height:20px;font-size:10px;color:#fff;white-space:nowrap;font-weight:bold;">2</div>
<div style="left:1546px;top:656px;width:207px;height:21px;background:#474747;border-top:1px solid #333;border-bottom:1px solid #333;"></div>
<div style="left:1549px;top:656px;height:20px;line-height:20px;font-size:9.5px;color:#dcdcdc;white-space:nowrap;letter-spacing:-0.22px;">2 Seiten auf 2 Druckbög</div>
<svg style="left:1652px;top:660px;" width="18" height="12" viewBox="0 0 18 12"><rect x="0" y="5" width="5" height="6" fill="#ddd"/><rect x="6" y="2" width="5" height="9" fill="#ddd"/><path d="M9 0 V8 M12 3 V10" stroke="#474747"/><rect x="10" y="4" width="4" height="6" fill="none" stroke="#ddd"/><path d="M14 9 H18 L16 11.5Z" fill="#ddd"/></svg>
<svg style="left:1685px;top:660px;" width="12" height="12" viewBox="0 0 12 12"><path d="M0.5 0.5 H10.5 V10.5 H5 V5.5 H0.5Z" fill="#ddd"/><path d="M5 10.5 L0.5 5.5" stroke="#ddd"/></svg>
<svg style="left:1715px;top:659px;" width="11" height="13" viewBox="0 0 11 13"><path d="M0 3 H11 M4 3 V1 H7 V3" fill="none" stroke="#ddd" stroke-width="1.3"/><path d="M1.5 4.5 H9.5 V12.5 H1.5Z" fill="none" stroke="#ddd" stroke-width="1.2"/><path d="M4 6 V11 M7 6 V11" stroke="#ddd"/></svg>
<svg style="left:1741px;top:667px;" width="10" height="10" viewBox="0 0 10 10"><path d="M9 1 V9 M7 3 V9 M5 5 V9 M3 7 V9" stroke="#6a6a6a" stroke-dasharray="1 1"/></svg>
<div style="left:1640px;top:678px;width:20px;height:4px;background:repeating-linear-gradient(90deg,#1a1a1a 0 1px,transparent 1px 2px);"></div>
<div style="left:1754px;top:78px;width:166px;height:963px;background:#2c2c2c;"></div>
<div style="left:1757px;top:90px;width:163px;height:948px;background:#464646;"></div>
<svg style="left:1905px;top:81px;" width="9" height="8" viewBox="0 0 9 8"><path d="M4 0.5 L0.5 4 L4 7.5Z M8.5 0.5 L5 4 L8.5 7.5Z" fill="#d0d0d0"/></svg>
<div style="left:1827px;top:92px;width:20px;height:4px;background:repeating-linear-gradient(90deg,#1e1e1e 0 1px,transparent 1px 2px);"></div>
<div style="left:1759px;top:101px;width:156px;height:25px;background:#2f2f2f;border-radius:3px;border:1px solid #2a2a2a;"></div>
<svg style="left:1766px;top:104px;" width="18" height="18" viewBox="0 0 18 18"><path d="M0 5 H3 V3 H7 V16 H0Z M11 3 H15 V5 H18 V16 H11Z" fill="#e0e0e0"/><path d="M9 0 V18" stroke="#e0e0e0" stroke-width="1.2"/><path d="M7 2 L5 0.5 M11 2 L13 0.5" stroke="#e0e0e0"/></svg>
<div style="left:1792px;top:104px;height:20px;line-height:20px;font-size:10.5px;color:#f0f0f0;white-space:nowrap;font-weight:bold;">Seiten</div>
<svg style="left:1766px;top:132px;" width="18" height="18" viewBox="0 0 18 18"><path d="M9 1 L17 5.5 L9 10 L1 5.5Z" fill="#dcdcdc"/><path d="M1.5 10 L9 14.5 L16.5 10" fill="none" stroke="#dcdcdc" stroke-width="2"/></svg>
<div style="left:1792px;top:132px;height:20px;line-height:20px;font-size:10.5px;color:#e6e6e6;white-space:nowrap;font-weight:bold;letter-spacing:-0.2px;">Ebenen</div>
<svg style="left:1765px;top:163px;" width="20" height="13" viewBox="0 0 20 13"><path d="M7 2 H4.5 A4.5 4.5 0 0 0 4.5 11 H7 M13 2 H15.5 A4.5 4.5 0 0 1 15.5 11 H13 M6 6.5 H14" fill="none" stroke="#e0e0e0" stroke-width="2"/></svg>
<div style="left:1792px;top:160px;height:20px;line-height:20px;font-size:10.5px;color:#e6e6e6;white-space:nowrap;font-weight:bold;letter-spacing:-0.1px;">Verknüpfungen</div>
<div style="left:1757px;top:186px;width:163px;height:2px;background:#2e2e2e;border-bottom:1px solid #555;"></div>
<div style="left:1827px;top:190px;width:20px;height:4px;background:repeating-linear-gradient(90deg,#1e1e1e 0 1px,transparent 1px 2px);"></div>
<svg style="left:1764px;top:202px;" width="22" height="17" viewBox="0 0 22 17"><path d="M11 1 C4 1 0.5 5 0.5 9 C0.5 13.5 5 16 9 16 C12 16 11 13 13 12.5 C16 12 21.5 12.5 21.5 8 C21.5 4 17 1 11 1Z" fill="#dcdcdc"/><circle cx="5" cy="9" r="1.7" fill="#464646"/><circle cx="8" cy="5" r="1.7" fill="#464646"/><circle cx="13" cy="4.5" r="1.7" fill="#464646"/><circle cx="17" cy="7.5" r="1.7" fill="#464646"/><circle cx="8.5" cy="12.5" r="1.7" fill="#464646"/></svg>
<div style="left:1792px;top:201px;height:20px;line-height:20px;font-size:10.5px;color:#e6e6e6;white-space:nowrap;font-weight:bold;">Farbe</div>
<div style="left:1757px;top:227px;width:163px;height:2px;background:#2e2e2e;border-bottom:1px solid #555;"></div>
<div style="left:594px;top:800px;width:210px;height:77px;background:#474747;border:1px solid #2a2a2a;"></div>
<div style="left:599px;top:822px;height:20px;line-height:20px;font-size:13px;color:#ddd;white-space:nowrap;text-decoration:underline;">A</div>
<div style="left:608px;top:819px;height:20px;line-height:20px;font-size:9px;color:#ddd;white-space:nowrap;">a</div>
<svg style="left:607px;top:834px;" width="7" height="9" viewBox="0 0 7 9"><path d="M3.5 0.5 V9 M1 3 L3.5 0.5 L6 3" fill="none" stroke="#ddd"/></svg>
<svg style="left:620px;top:828px;" width="12" height="13" viewBox="0 0 12 13"><rect x="0.5" y="0.5" width="11" height="12" fill="#3d3d3d" stroke="#333"/><path d="M3.0 5.0 L6.0 1.5 L9.0 5.0Z M3.0 8.0 L6.0 11.5 L9.0 8.0Z" fill="#d8d8d8"/></svg>
<div style="left:635px;top:828px;width:56px;height:14px;background:#a8a8a8;border:1px solid #383838;border-bottom-color:#5c5c5c;border-right-color:#5c5c5c;color:#222;font-size:9.5px;line-height:12px;padding-left:2px;white-space:nowrap;overflow:hidden;">0 Pt</div>
<div style="left:700px;top:823px;height:20px;line-height:20px;font-size:16px;color:#ddd;white-space:nowrap;font-family:'Liberation Serif',serif;font-style:italic;">T</div>
<svg style="left:720px;top:828px;" width="12" height="13" viewBox="0 0 12 13"><rect x="0.5" y="0.5" width="11" height="12" fill="#3d3d3d" stroke="#333"/><path d="M3.0 5.0 L6.0 1.5 L9.0 5.0Z M3.0 8.0 L6.0 11.5 L9.0 8.0Z" fill="#d8d8d8"/></svg>
<div style="left:735px;top:828px;width:62px;height:14px;background:#a8a8a8;border:1px solid #383838;border-bottom-color:#5c5c5c;border-right-color:#5c5c5c;color:#222;font-size:9.5px;line-height:12px;padding-left:2px;white-space:nowrap;overflow:hidden;">0°</div>
<div style="left:600px;top:848px;width:198px;height:1px;background:#383838;"></div>
<div style="left:600px;top:849px;width:198px;height:1px;background:#555;"></div>
<div style="left:604px;top:851px;height:20px;line-height:20px;font-size:9.5px;color:#dcdcdc;white-space:nowrap;letter-spacing:-0.2px;">Sprache:</div>
<div style="left:646px;top:854px;width:138px;height:15px;background:#4a4a4a;border:1px solid #383838;border-bottom-color:#5c5c5c;border-right-color:#5c5c5c;color:#e0e0e0;font-size:9.5px;line-height:13px;padding-left:3px;white-space:nowrap;overflow:hidden;letter-spacing:-0.35px;border-color:#2e2e2e;">Deutsch: 2006 Rechtschreibr...</div>
<svg style="left:783px;top:854px;" width="14" height="15" viewBox="0 0 14 15"><rect x="0.5" y="0.5" width="13" height="14" fill="#4a4a4a" stroke="#383838"/><path d="M3.5 5.5 L10.5 5.5 L7.0 10.5Z" fill="#e4e4e4"/></svg>
<div style="left:100px;top:208px;width:827px;height:614px;border-radius:7px;box-shadow:2px 4px 13px 2px rgba(0,0,0,0.62),0 0 2px 0 rgba(0,0,0,0.7);background:#5b6e84;"></div>
<div style="left:100px;top:208px;width:827px;height:614px;border-radius:7px;border:1px solid #1c2026;background:linear-gradient(90deg,#b9c0c8 0px,#b4bcc6 70px,#8e9aa8 125px,#5e6b79 150px,#4f5f6d 200px,#526373 300px,#4b5b69 400px,#465563 480px,#3f4c59 500px,#2a333d 520px,#44515f 545px,#4f5d6d 575px,#272f39 600px,#242b34 660px,#333c47 690px,#555e69 712px,#aab7c4 722px,#c4d2e0 735px,#c6d6e6 827px);"></div>
<div style="left:101px;top:209px;width:825px;height:612px;border-radius:6px;border:1px solid rgba(255,255,255,0.9);"></div>
<div style="left:102px;top:210px;width:823px;height:26px;overflow:hidden;border-radius:5px 5px 0 0;"><div style="left:0;top:0;width:823px;height:26px;background:linear-gradient(rgba(255,255,255,.10),rgba(255,255,255,0) 40%,rgba(0,0,0,0) 60%,rgba(0,0,0,.12))"></div><div style="left:250px;top:-10px;width:60px;height:50px;background:rgba(255,255,255,.08);transform:skewX(-40deg);filter:blur(4px)"></div><div style="left:380px;top:-10px;width:40px;height:50px;background:rgba(255,255,255,.07);transform:skewX(-40deg);filter:blur(4px)"></div><div style="left:505px;top:12px;width:70px;height:9px;background:#7d8ea0;filter:blur(4px);opacity:.75"></div><div style="left:610px;top:-8px;width:26px;height:50px;background:rgba(150,165,180,.25);transform:skewX(-35deg);filter:blur(3px)"></div></div>
<div style="left:102px;top:236px;width:4px;height:583px;background:linear-gradient(#b2b9c1 0,#b9c0c8 60px,#c6ced6 138px,#5a6b7e 146px,#44566b 160px,#43556a 100%);"></div>
<div style="left:102px;top:816px;width:723px;height:4px;background:linear-gradient(90deg,#4e637b 0,#4e637b 420px,#3b4a5d 560px,#5b6f88 640px,#3e4d60 700px,#46566c 721px);border-radius:0 0 0 4px;"></div>
<div style="left:824px;top:816px;width:101px;height:4px;background:linear-gradient(90deg,#46566c 0,#b0cae2 10px,#b2cde6 100%);"></div>
<div style="left:921px;top:236px;width:4px;height:583px;background:#b0cbe5;"></div>
<div style="left:104px;top:212px;width:135px;height:22px;background:radial-gradient(ellipse at 45% 50%,rgba(255,255,255,0.55) 0%,rgba(255,255,255,0.35) 55%,rgba(255,255,255,0) 100%);filter:blur(2px);"></div>
<div style="left:108px;top:213px;height:20px;line-height:20px;font-size:12.5px;color:#101010;white-space:nowrap;letter-spacing:0.05px;">Absatzformatoptionen</div>
<div style="left:106px;top:236px;width:815px;height:580px;background:#4a4a4a;border:1px solid #e8eef4;border-color:#eef3f8 #f0f6fc #eef3f8 #eef3f8;"></div>
<div style="left:107px;top:237px;width:813px;height:578px;border:1px solid #2e2e2e;"></div>
<div style="left:122px;top:252px;width:224px;height:481px;background:#474747;border:1px solid #2a2a2a;border-bottom-color:#474747;border-right-color:#3a3a3a;"></div>
<div style="left:123px;top:253px;width:209px;height:16px;background:#454545;border-bottom:1px solid #2c2c2c;border-top:1px solid #4d4d4d;"></div>
<div style="left:126px;top:250px;height:20px;line-height:20px;font-size:9.5px;color:#d4d4d4;white-space:nowrap;letter-spacing:-0.22px;">Allgemein</div>
<div style="left:123px;top:269px;width:209px;height:16px;background:#454545;border-bottom:1px solid #2c2c2c;border-top:1px solid #4d4d4d;"></div>
<div style="left:126px;top:266px;height:20px;line-height:20px;font-size:9.5px;color:#d4d4d4;white-space:nowrap;letter-spacing:-0.22px;">Grundlegende Zeichenformate</div>
<div style="left:123px;top:285px;width:209px;height:16px;background:#454545;border-bottom:1px solid #2c2c2c;border-top:1px solid #4d4d4d;"></div>
<div style="left:126px;top:282px;height:20px;line-height:20px;font-size:9.5px;color:#d4d4d4;white-space:nowrap;letter-spacing:-0.22px;">Erweiterte Zeichenformate</div>
<div style="left:123px;top:301px;width:209px;height:16px;background:#454545;border-bottom:1px solid #2c2c2c;border-top:1px solid #4d4d4d;"></div>
<div style="left:126px;top:298px;height:20px;line-height:20px;font-size:9.5px;color:#d4d4d4;white-space:nowrap;letter-spacing:-0.22px;">Einzüge und Abstände</div>
<div style="left:123px;top:317px;width:209px;height:16px;background:#3e4e66;border-bottom:1px solid #2c2c2c;border-top:1px solid #4a5a72;"></div>
<div style="left:126px;top:314px;height:20px;line-height:20px;font-size:9.5px;color:#ffffff;white-space:nowrap;letter-spacing:-0.22px;">Tabulatoren</div>
<div style="left:123px;top:333px;width:209px;height:16px;background:#454545;border-bottom:1px solid #2c2c2c;border-top:1px solid #4d4d4d;"></div>
<div style="left:126px;top:330px;height:20px;line-height:20px;font-size:9.5px;color:#d4d4d4;white-space:nowrap;letter-spacing:-0.22px;">Absatzlinien</div>
<div style="left:123px;top:349px;width:209px;height:16px;background:#454545;border-bottom:1px solid #2c2c2c;border-top:1px solid #4d4d4d;"></div>
<div style="left:126px;top:346px;height:20px;line-height:20px;font-size:9.5px;color:#d4d4d4;white-space:nowrap;letter-spacing:-0.22px;">Umbruchoptionen</div>
<div style="left:123px;top:365px;width:209px;height:16px;background:#454545;border-bottom:1px solid #2c2c2c;border-top:1px solid #4d4d4d;"></div>
<div style="left:126px;top:362px;height:20px;line-height:20px;font-size:9.5px;color:#d4d4d4;white-space:nowrap;letter-spacing:-0.22px;">Silbentrennung</div>
<div style="left:123px;top:381px;width:209px;height:16px;background:#454545;border-bottom:1px solid #2c2c2c;border-top:1px solid #4d4d4d;"></div>
<div style="left:126px;top:378px;height:20px;line-height:20px;font-size:9.5px;color:#d4d4d4;white-space:nowrap;letter-spacing:-0.22px;">Abstände</div>
<div style="left:123px;top:397px;width:209px;height:16px;background:#454545;border-bottom:1px solid #2c2c2c;border-top:1px solid #4d4d4d;"></div>
<div style="left:126px;top:394px;height:20px;line-height:20px;font-size:9.5px;color:#d4d4d4;white-space:nowrap;letter-spacing:-0.22px;">Spaltenspanne</div>
<div style="left:123px;top:413px;width:209px;height:16px;background:#454545;border-bottom:1px solid #2c2c2c;border-top:1px solid #4d4d4d;"></div>
<div style="left:126px;top:410px;height:20px;line-height:20px;font-size:9.5px;color:#d4d4d4;white-space:nowrap;letter-spacing:-0.22px;">Initialen und verschachtelte Formate</div>
<div style="left:123px;top:429px;width:209px;height:16px;background:#454545;border-bottom:1px solid #2c2c2c;border-top:1px solid #4d4d4d;"></div>
<div style="left:126px;top:426px;height:20px;line-height:20px;font-size:9.5px;color:#d4d4d4;white-space:nowrap;letter-spacing:-0.22px;">GREP-Stil</div>
<div style="left:123px;top:445px;width:209px;height:16px;background:#454545;border-bottom:1px solid #2c2c2c;border-top:1px solid #4d4d4d;"></div>
<div style="left:126px;top:442px;height:20px;line-height:20px;font-size:9.5px;color:#d4d4d4;white-space:nowrap;letter-spacing:-0.22px;">Aufzählungszeichen und Nummerierung</div>
<div style="left:123px;top:461px;width:209px;height:16px;background:#454545;border-bottom:1px solid #2c2c2c;border-top:1px solid #4d4d4d;"></div>
<div style="left:126px;top:458px;height:20px;line-height:20px;font-size:9.5px;color:#d4d4d4;white-space:nowrap;letter-spacing:-0.22px;">Zeichenfarbe</div>
<div style="left:123px;top:477px;width:209px;height:16px;background:#454545;border-bottom:1px solid #2c2c2c;border-top:1px solid #4d4d4d;"></div>
<div style="left:126px;top:474px;height:20px;line-height:20px;font-size:9.5px;color:#d4d4d4;white-space:nowrap;letter-spacing:-0.22px;">OpenType-Funktionen</div>
<div style="left:123px;top:493px;width:209px;height:16px;background:#454545;border-bottom:1px solid #2c2c2c;border-top:1px solid #4d4d4d;"></div>
<div style="left:126px;top:490px;height:20px;line-height:20px;font-size:9.5px;color:#d4d4d4;white-space:nowrap;letter-spacing:-0.22px;">Unterstreichungsoptionen</div>
<div style="left:123px;top:509px;width:209px;height:16px;background:#454545;border-bottom:1px solid #2c2c2c;border-top:1px solid #4d4d4d;"></div>
<div style="left:126px;top:506px;height:20px;line-height:20px;font-size:9.5px;color:#d4d4d4;white-space:nowrap;letter-spacing:-0.22px;">Durchstreichungsoptionen</div>
<div style="left:123px;top:525px;width:209px;height:16px;background:#454545;border-bottom:1px solid #2c2c2c;border-top:1px solid #4d4d4d;"></div>
<div style="left:126px;top:522px;height:20px;line-height:20px;font-size:9.5px;color:#d4d4d4;white-space:nowrap;letter-spacing:-0.22px;">Tagsexport</div>
<div style="left:123px;top:541px;width:209px;height:191px;background:#474747;"></div>
<div style="left:332px;top:253px;width:13px;height:479px;background:#3a3a3a;border-left:1px solid #2c2c2c;"></div>
<svg style="left:335px;top:257px;" width="8" height="6" viewBox="0 0 8 6"><path d="M0 5.5 L4 0.5 L8 5.5Z" fill="#8a8a8a"/></svg>
<svg style="left:335px;top:722px;" width="8" height="6" viewBox="0 0 8 6"><path d="M0 0.5 L4 5.5 L8 0.5Z" fill="#8a8a8a"/></svg>
<div style="left:234px;width:300px;text-align:right;top:253px;height:20px;line-height:20px;font-size:12.5px;color:#e0e0e0;white-space:nowrap;letter-spacing:0.05px;">Formatname:</div>
<div style="left:539px;top:254px;width:253px;height:18px;background:#a6a6a6;border:1px solid #383838;border-bottom-color:#5c5c5c;border-right-color:#5c5c5c;color:#111;font-size:12px;line-height:16px;padding-left:3px;white-space:nowrap;overflow:hidden;">Fließtext</div>
<div style="left:233px;width:300px;text-align:right;top:276px;height:20px;line-height:20px;font-size:8.5px;color:#d8d8d8;white-space:nowrap;">Position:</div>
<div style="left:356px;top:296px;height:20px;line-height:20px;font-size:12.5px;color:#e0e0e0;white-space:nowrap;letter-spacing:-0.1px;">Tabulatoren</div>
<div style="left:356px;top:322px;width:542px;height:1px;background:#3a3a3a;"></div>
<div style="left:356px;top:323px;width:542px;height:1px;background:#585858;"></div>
<div style="left:377px;top:350px;width:15px;height:15px;background:#2a2a2a;border:1px solid #222;"></div>
<svg style="left:379px;top:352px;" width="11" height="11" viewBox="0 0 11 11"><path d="M5.5 1 V9 M2.5 6.5 L5.5 10 L8.5 6.5" fill="none" stroke="#e4e4e4" stroke-width="1.2"/><path d="M5.5 1.5 H8.5" stroke="#e4e4e4" stroke-width="1.2"/></svg>
<svg style="left:401px;top:352px;" width="11" height="11" viewBox="0 0 11 11"><path d="M5.5 1 V9 M2.5 6.5 L5.5 10 L8.5 6.5" fill="none" stroke="#e4e4e4" stroke-width="1.2"/></svg>
<svg style="left:425px;top:352px;" width="11" height="11" viewBox="0 0 11 11"><path d="M5.5 1 V9 M2.5 6.5 L5.5 10 L8.5 6.5" fill="none" stroke="#e4e4e4" stroke-width="1.2"/><path d="M2.5 1.5 H5.5" stroke="#e4e4e4" stroke-width="1.2"/></svg>
<svg style="left:447px;top:352px;" width="11" height="11" viewBox="0 0 11 11"><path d="M5.5 1 V9 M2.5 6.5 L5.5 10 L8.5 6.5" fill="none" stroke="#e4e4e4" stroke-width="1.2"/><rect x="7" y="1" width="1.5" height="1.5" fill="#e4e4e4"/></svg>
<div style="left:365px;top:381px;width:525px;height:11px;background:#0e0e0e;"></div>
<div style="left:365px;top:382px;width:318px;height:9px;background:#6e6e6e;"></div>
<svg style="left:365px;top:382px;" width="6" height="9" viewBox="0 0 6 9"><path d="M0.5 0.5 L5.5 4.5 L0.5 8.5Z" fill="#d8d8d8" stroke="#fff" stroke-width="0.6"/></svg>
<svg style="left:678px;top:381px;" width="10" height="11" viewBox="0 0 10 11"><path d="M0 5 H3" stroke="#f0a030"/><path d="M3.5 0.5 H8.5 V10.5 H3.5Z" fill="#e8952a" stroke="#f6b050"/><path d="M6 2 V8 M4.5 6.5 L6 8.5 L7.5 6.5 M6 2.5 H7.5" fill="none" stroke="#222" stroke-width="1"/></svg>
<div style="left:365px;top:395px;width:525px;height:21px;background:#1a1a1a;"></div>
<svg style="left:365px;top:395px;" width="525" height="21" viewBox="0 0 525 21"><path d="M0.5 1 V20" stroke="#d8d8d8"/><text x="2.5" y="9.5" font-size="9.5" fill="#e0e0e0" font-family="Liberation Sans" letter-spacing="-0.3">0</text><path d="M4.5 17.5 V20" stroke="#a8a8a8"/><path d="M8.5 17.5 V20" stroke="#a8a8a8"/><path d="M13.5 17.5 V20" stroke="#a8a8a8"/><path d="M17.5 17.5 V20" stroke="#a8a8a8"/><path d="M21.5 15 V20" stroke="#c8c8c8"/><path d="M25.5 17.5 V20" stroke="#a8a8a8"/><path d="M29.5 17.5 V20" stroke="#a8a8a8"/><path d="M34.5 17.5 V20" stroke="#a8a8a8"/><path d="M38.5 17.5 V20" stroke="#a8a8a8"/><path d="M42.5 1 V20" stroke="#d8d8d8"/><text x="44.5" y="9.5" font-size="9.5" fill="#e0e0e0" font-family="Liberation Sans" letter-spacing="-0.3">10</text><path d="M46.5 17.5 V20" stroke="#a8a8a8"/><path d="M50.5 17.5 V20" stroke="#a8a8a8"/><path d="M55.5 17.5 V20" stroke="#a8a8a8"/><path d="M59.5 17.5 V20" stroke="#a8a8a8"/><path d="M63.5 15 V20" stroke="#c8c8c8"/><path d="M67.5 17.5 V20" stroke="#a8a8a8"/><path d="M71.5 17.5 V20" stroke="#a8a8a8"/><path d="M76.5 17.5 V20" stroke="#a8a8a8"/><path d="M80.5 17.5 V20" stroke="#a8a8a8"/><path d="M84.5 1 V20" stroke="#d8d8d8"/><text x="86.5" y="9.5" font-size="9.5" fill="#e0e0e0" font-family="Liberation Sans" letter-spacing="-0.3">20</text><path d="M88.5 17.5 V20" stroke="#a8a8a8"/><path d="M92.5 17.5 V20" stroke="#a8a8a8"/><path d="M97.5 17.5 V20" stroke="#a8a8a8"/><path d="M101.5 17.5 V20" stroke="#a8a8a8"/><path d="M105.5 15 V20" stroke="#c8c8c8"/><path d="M109.5 17.5 V20" stroke="#a8a8a8"/><path d="M113.5 17.5 V20" stroke="#a8a8a8"/><path d="M118.5 17.5 V20" stroke="#a8a8a8"/><path d="M122.5 17.5 V20" stroke="#a8a8a8"/><path d="M126.5 1 V20" stroke="#d8d8d8"/><text x="128.5" y="9.5" font-size="9.5" fill="#e0e0e0" font-family="Liberation Sans" letter-spacing="-0.3">30</text><path d="M130.5 17.5 V20" stroke="#a8a8a8"/><path d="M134.5 17.5 V20" stroke="#a8a8a8"/><path d="M139.5 17.5 V20" stroke="#a8a8a8"/><path d="M143.5 17.5 V20" stroke="#a8a8a8"/><path d="M147.5 15 V20" stroke="#c8c8c8"/><path d="M151.5 17.5 V20" stroke="#a8a8a8"/><path d="M155.5 17.5 V20" stroke="#a8a8a8"/><path d="M160.5 17.5 V20" stroke="#a8a8a8"/><path d="M164.5 17.5 V20" stroke="#a8a8a8"/><path d="M168.5 1 V20" stroke="#d8d8d8"/><text x="170.5" y="9.5" font-size="9.5" fill="#e0e0e0" font-family="Liberation Sans" letter-spacing="-0.3">40</text><path d="M172.5 17.5 V20" stroke="#a8a8a8"/><path d="M176.5 17.5 V20" stroke="#a8a8a8"/><path d="M181.5 17.5 V20" stroke="#a8a8a8"/><path d="M185.5 17.5 V20" stroke="#a8a8a8"/><path d="M189.5 15 V20" stroke="#c8c8c8"/><path d="M193.5 17.5 V20" stroke="#a8a8a8"/><path d="M197.5 17.5 V20" stroke="#a8a8a8"/><path d="M202.5 17.5 V20" stroke="#a8a8a8"/><path d="M206.5 17.5 V20" stroke="#a8a8a8"/><path d="M210.5 1 V20" stroke="#d8d8d8"/><text x="212.5" y="9.5" font-size="9.5" fill="#e0e0e0" font-family="Liberation Sans" letter-spacing="-0.3">50</text><path d="M214.5 17.5 V20" stroke="#a8a8a8"/><path d="M218.5 17.5 V20" stroke="#a8a8a8"/><path d="M223.5 17.5 V20" stroke="#a8a8a8"/><path d="M227.5 17.5 V20" stroke="#a8a8a8"/><path d="M231.5 15 V20" stroke="#c8c8c8"/><path d="M235.5 17.5 V20" stroke="#a8a8a8"/><path d="M239.5 17.5 V20" stroke="#a8a8a8"/><path d="M244.5 17.5 V20" stroke="#a8a8a8"/><path d="M248.5 17.5 V20" stroke="#a8a8a8"/><path d="M252.5 1 V20" stroke="#d8d8d8"/><text x="254.5" y="9.5" font-size="9.5" fill="#e0e0e0" font-family="Liberation Sans" letter-spacing="-0.3">60</text><path d="M256.5 17.5 V20" stroke="#a8a8a8"/><path d="M260.5 17.5 V20" stroke="#a8a8a8"/><path d="M265.5 17.5 V20" stroke="#a8a8a8"/><path d="M269.5 17.5 V20" stroke="#a8a8a8"/><path d="M273.5 15 V20" stroke="#c8c8c8"/><path d="M277.5 17.5 V20" stroke="#a8a8a8"/><path d="M281.5 17.5 V20" stroke="#a8a8a8"/><path d="M286.5 17.5 V20" stroke="#a8a8a8"/><path d="M290.5 17.5 V20" stroke="#a8a8a8"/><path d="M294.5 1 V20" stroke="#d8d8d8"/><text x="296.5" y="9.5" font-size="9.5" fill="#e0e0e0" font-family="Liberation Sans" letter-spacing="-0.3">70</text><path d="M298.5 17.5 V20" stroke="#a8a8a8"/><path d="M302.5 17.5 V20" stroke="#a8a8a8"/><path d="M307.5 17.5 V20" stroke="#a8a8a8"/><path d="M311.5 17.5 V20" stroke="#a8a8a8"/><path d="M315.5 15 V20" stroke="#c8c8c8"/><path d="M319.5 17.5 V20" stroke="#a8a8a8"/><path d="M323.5 17.5 V20" stroke="#a8a8a8"/><path d="M328.5 17.5 V20" stroke="#a8a8a8"/><path d="M332.5 17.5 V20" stroke="#a8a8a8"/><path d="M336.5 1 V20" stroke="#d8d8d8"/><text x="338.5" y="9.5" font-size="9.5" fill="#e0e0e0" font-family="Liberation Sans" letter-spacing="-0.3">80</text><path d="M340.5 17.5 V20" stroke="#a8a8a8"/><path d="M344.5 17.5 V20" stroke="#a8a8a8"/><path d="M349.5 17.5 V20" stroke="#a8a8a8"/><path d="M353.5 17.5 V20" stroke="#a8a8a8"/><path d="M357.5 15 V20" stroke="#c8c8c8"/><path d="M361.5 17.5 V20" stroke="#a8a8a8"/><path d="M365.5 17.5 V20" stroke="#a8a8a8"/><path d="M370.5 17.5 V20" stroke="#a8a8a8"/><path d="M374.5 17.5 V20" stroke="#a8a8a8"/><path d="M378.5 1 V20" stroke="#d8d8d8"/><text x="380.5" y="9.5" font-size="9.5" fill="#e0e0e0" font-family="Liberation Sans" letter-spacing="-0.3">90</text><path d="M382.5 17.5 V20" stroke="#a8a8a8"/><path d="M386.5 17.5 V20" stroke="#a8a8a8"/><path d="M391.5 17.5 V20" stroke="#a8a8a8"/><path d="M395.5 17.5 V20" stroke="#a8a8a8"/><path d="M399.5 15 V20" stroke="#c8c8c8"/><path d="M403.5 17.5 V20" stroke="#a8a8a8"/><path d="M407.5 17.5 V20" stroke="#a8a8a8"/><path d="M412.5 17.5 V20" stroke="#a8a8a8"/><path d="M416.5 17.5 V20" stroke="#a8a8a8"/><path d="M420.5 1 V20" stroke="#d8d8d8"/><text x="422.5" y="9.5" font-size="9.5" fill="#e0e0e0" font-family="Liberation Sans" letter-spacing="-0.3">100</text><path d="M424.5 17.5 V20" stroke="#a8a8a8"/><path d="M428.5 17.5 V20" stroke="#a8a8a8"/><path d="M433.5 17.5 V20" stroke="#a8a8a8"/><path d="M437.5 17.5 V20" stroke="#a8a8a8"/><path d="M441.5 15 V20" stroke="#c8c8c8"/><path d="M445.5 17.5 V20" stroke="#a8a8a8"/><path d="M449.5 17.5 V20" stroke="#a8a8a8"/><path d="M454.5 17.5 V20" stroke="#a8a8a8"/><path d="M458.5 17.5 V20" stroke="#a8a8a8"/><path d="M462.5 1 V20" stroke="#d8d8d8"/><text x="464.5" y="9.5" font-size="9.5" fill="#e0e0e0" font-family="Liberation Sans" letter-spacing="-0.3">110</text><path d="M466.5 17.5 V20" stroke="#a8a8a8"/><path d="M470.5 17.5 V20" stroke="#a8a8a8"/><path d="M475.5 17.5 V20" stroke="#a8a8a8"/><path d="M479.5 17.5 V20" stroke="#a8a8a8"/><path d="M483.5 15 V20" stroke="#c8c8c8"/><path d="M487.5 17.5 V20" stroke="#a8a8a8"/><path d="M491.5 17.5 V20" stroke="#a8a8a8"/><path d="M496.5 17.5 V20" stroke="#a8a8a8"/><path d="M500.5 17.5 V20" stroke="#a8a8a8"/><path d="M504.5 1 V20" stroke="#d8d8d8"/><text x="506.5" y="9.5" font-size="9.5" fill="#e0e0e0" font-family="Liberation Sans" letter-spacing="-0.3">120</text><path d="M508.5 17.5 V20" stroke="#a8a8a8"/><path d="M512.5 17.5 V20" stroke="#a8a8a8"/><path d="M517.5 17.5 V20" stroke="#a8a8a8"/><path d="M521.5 17.5 V20" stroke="#a8a8a8"/><path d="M0 19.5 H525" stroke="#b0b0b0"/></svg>
<div style="left:157px;width:300px;text-align:right;top:436px;height:20px;line-height:20px;font-size:12px;color:#e0e0e0;white-space:nowrap;">x:</div>
<svg style="left:463px;top:438px;" width="13" height="16" viewBox="0 0 13 16"><rect x="0.5" y="0.5" width="12" height="15" fill="#3d3d3d" stroke="#333"/><path d="M3.5 6.5 L6.5 3.0 L9.5 6.5Z M3.5 9.5 L6.5 13.0 L9.5 9.5Z" fill="#d8d8d8"/></svg>
<div style="left:478px;top:438px;width:53px;height:16px;background:#b4b4b4;border:1px solid #383838;border-bottom-color:#5c5c5c;border-right-color:#5c5c5c;color:#111;font-size:12px;line-height:14px;padding-left:2px;white-space:nowrap;overflow:hidden;">76 mm</div>
<div style="left:563px;top:437px;width:91px;height:18px;background:linear-gradient(#585858,#4a4a4a);border:1px solid #303030;box-shadow:inset 0 1px 0 #707070;text-align:center;font-size:12px;color:#e6e6e6;line-height:16px;">Wiederholen</div>
<div style="left:665px;top:437px;width:88px;height:18px;background:linear-gradient(#585858,#4a4a4a);border:1px solid #303030;box-shadow:inset 0 1px 0 #707070;text-align:center;font-size:12px;color:#e6e6e6;line-height:16px;">Alle löschen</div>
<div style="left:157px;width:300px;text-align:right;top:461px;height:20px;line-height:20px;font-size:12.5px;color:#e0e0e0;white-space:nowrap;letter-spacing:0.05px;">Füllzeichen:</div>
<div style="left:462px;top:461px;width:80px;height:20px;background:#b4b4b4;border:1px solid #383838;border-bottom-color:#5c5c5c;border-right-color:#5c5c5c;color:#111;font-size:12px;line-height:18px;padding-left:4px;white-space:nowrap;overflow:hidden;border:1px solid #dd842c;box-shadow:inset 0 0 0 1px #4a3a2a;line-height:15px;">.</div>
<div style="left:157px;width:300px;text-align:right;top:486px;height:20px;line-height:20px;font-size:12.5px;color:#e0e0e0;white-space:nowrap;letter-spacing:0.05px;">Ausrichten an:</div>
<div style="left:463px;top:488px;width:78px;height:16px;background:#9c9c9c;border:1px solid #383838;border-bottom-color:#5c5c5c;border-right-color:#5c5c5c;color:#111;font-size:11px;line-height:14px;padding-left:3px;white-space:nowrap;overflow:hidden;"></div>
<div style="left:124px;top:778px;width:12px;height:12px;background:#3a3a3a;border:1px solid #2a2a2a;"></div>
<svg style="left:125px;top:776px;" width="13" height="13" viewBox="0 0 13 13"><path d="M2 6.5 L5 10.5 L11.5 1.5" fill="none" stroke="#f0f0f0" stroke-width="1.8"/></svg>
<div style="left:141px;top:774px;height:20px;line-height:20px;font-size:12.5px;color:#e6e6e6;white-space:nowrap;letter-spacing:-0.2px;">Vorschau</div>
<div style="left:704px;top:774px;width:95px;height:20px;background:linear-gradient(#585858,#4a4a4a);border:2px solid #1e1e1e;box-shadow:inset 0 1px 0 #707070;text-align:center;font-size:12px;color:#e6e6e6;line-height:16px;">OK</div>
<div style="left:811px;top:775px;width:92px;height:18px;background:linear-gradient(#585858,#4a4a4a);border:1px solid #303030;box-shadow:inset 0 1px 0 #707070;text-align:center;font-size:12px;color:#e6e6e6;line-height:16px;">Abbrechen</div>
<div style="left:1340px;top:666px;width:209px;height:270px;background:#474747;border:1px solid #222;border-radius:3px 3px 0 0;box-shadow:0 1px 3px rgba(0,0,0,0.5);"></div>
<div style="left:1341px;top:667px;width:207px;height:14px;background:linear-gradient(#2f2f2f,#262626);border-radius:2px 2px 0 0;"></div>
<svg style="left:1519px;top:671px;" width="9" height="7" viewBox="0 0 9 7"><path d="M4 0 L0.5 3.5 L4 7Z M8.5 0 L5 3.5 L8.5 7Z" fill="#d8d8d8"/></svg>
<svg style="left:1536px;top:670px;" width="8" height="8" viewBox="0 0 8 8"><path d="M1 1 L7 7 M7 1 L1 7" stroke="#e4e4e4" stroke-width="1.7"/></svg>
<div style="left:1341px;top:681px;width:207px;height:17px;background:#343434;border-bottom:1px solid #2a2a2a;"></div>
<div style="left:1341px;top:681px;width:54px;height:18px;background:#474747;border-right:1px solid #2c2c2c;"></div>
<svg style="left:1345px;top:684px;" width="7" height="11" viewBox="0 0 7 11"><path d="M0.8 4 L3.5 1 L6.2 4 M0.8 7 L3.5 10 L6.2 7" fill="none" stroke="#ddd" stroke-width="1.1"/></svg>
<div style="left:1354px;top:679px;height:20px;line-height:20px;font-size:10.5px;color:#ececec;white-space:nowrap;font-weight:bold;">Kontur</div>
<svg style="left:1530px;top:685px;" width="15" height="8" viewBox="0 0 15 8"><path d="M0 1.5 H4.5 L2.2 4.5Z" fill="#ddd"/><path d="M5.5 0.5 H14.5 M5.5 2.5 H14.5 M5.5 4.5 H14.5 M5.5 6.5 H14.5" stroke="#ddd"/></svg>
<div style="left:1129px;width:300px;text-align:right;top:703px;height:20px;line-height:20px;font-size:9.5px;color:#dcdcdc;white-space:nowrap;letter-spacing:-0.3px;">Stärke:</div>
<svg style="left:1434px;top:706px;" width="13" height="15" viewBox="0 0 13 15"><rect x="0.5" y="0.5" width="12" height="14" fill="#3d3d3d" stroke="#333"/><path d="M3.5 6.0 L6.5 2.5 L9.5 6.0Z M3.5 9.0 L6.5 12.5 L9.5 9.0Z" fill="#d8d8d8"/></svg>
<div style="left:1448px;top:706px;width:45px;height:15px;background:#b2b2b2;border:1px solid #383838;border-bottom-color:#5c5c5c;border-right-color:#5c5c5c;color:#111;font-size:9.5px;line-height:13px;padding-left:3px;white-space:nowrap;overflow:hidden;">1 Pt</div>
<svg style="left:1492px;top:706px;" width="14" height="15" viewBox="0 0 14 15"><rect x="0.5" y="0.5" width="13" height="14" fill="#606060" stroke="#383838"/><path d="M3.5 5.5 L10.5 5.5 L7.0 10.5Z" fill="#e4e4e4"/></svg>
<div style="left:1129px;width:300px;text-align:right;top:727px;height:20px;line-height:20px;font-size:9.5px;color:#dcdcdc;white-space:nowrap;letter-spacing:-0.3px;">Gehrungsgrenze:</div>
<svg style="left:1434px;top:729px;" width="13" height="15" viewBox="0 0 13 15"><rect x="0.5" y="0.5" width="12" height="14" fill="#3d3d3d" stroke="#333"/><path d="M3.5 6.0 L6.5 2.5 L9.5 6.0Z M3.5 9.0 L6.5 12.5 L9.5 9.0Z" fill="#d8d8d8"/></svg>
<div style="left:1448px;top:729px;width:41px;height:15px;background:#b2b2b2;border:1px solid #383838;border-bottom-color:#5c5c5c;border-right-color:#5c5c5c;color:#111;font-size:9.5px;line-height:13px;padding-left:3px;white-space:nowrap;overflow:hidden;">4</div>
<div style="left:1493px;top:727px;height:20px;line-height:20px;font-size:10px;color:#b8b8b8;white-space:nowrap;">x</div>
<div style="left:1129px;width:300px;text-align:right;top:748px;height:20px;line-height:20px;font-size:9.5px;color:#dcdcdc;white-space:nowrap;letter-spacing:-0.3px;">Abschluss:</div>
<div style="left:1435px;top:751px;width:16px;height:16px;background:#2a2a2a;border:1px solid #202020;"></div>
<svg style="left:1438px;top:753px;" width="11" height="12" viewBox="0 0 11 12"><rect x="3" y="0.5" width="8" height="11" fill="#cfcfcf"/><path d="M0 6 H7" stroke="#222" stroke-width="1.3"/><rect x="2" y="4.5" width="3" height="3" fill="#222"/></svg>
<svg style="left:1454px;top:753px;" width="13" height="12" viewBox="0 0 13 12"><path d="M12.5 0.5 H6 A5.5 5.5 0 0 0 6 11.5 H12.5Z" fill="#cfcfcf"/><path d="M5 6 H12.5" stroke="#222" stroke-width="1.3"/><rect x="4" y="4.5" width="3" height="3" fill="#222"/></svg>
<svg style="left:1471px;top:753px;" width="13" height="12" viewBox="0 0 13 12"><rect x="0.5" y="0.5" width="12" height="11" fill="#cfcfcf"/><path d="M5 6 H12.5" stroke="#222" stroke-width="1.3"/><rect x="4" y="4.5" width="3" height="3" fill="#222"/></svg>
<div style="left:1129px;width:300px;text-align:right;top:772px;height:20px;line-height:20px;font-size:9.5px;color:#dcdcdc;white-space:nowrap;letter-spacing:-0.3px;">Ecke:</div>
<div style="left:1435px;top:774px;width:16px;height:17px;background:#2a2a2a;border:1px solid #202020;"></div>
<svg style="left:1437px;top:776px;" width="13" height="13" viewBox="0 0 13 13"><path d="M0.5 0.5 H12.5 V6 H6 V12.5 H0.5Z" fill="#cfcfcf"/><path d="M6.5 12.5 V6.5 H12.5" fill="none" stroke="#222" stroke-width="1.2"/><rect x="5" y="5" width="3" height="3" fill="#222"/></svg>
<svg style="left:1454px;top:776px;" width="13" height="13" viewBox="0 0 13 13"><path d="M0.5 12.5 V6.5 A6 6 0 0 1 6.5 0.5 H12.5 V6 H6 V12.5Z" fill="#cfcfcf"/><path d="M6.5 12.5 V6.5 H12.5" fill="none" stroke="#222" stroke-width="1.2"/><rect x="5" y="5" width="3" height="3" fill="#222"/></svg>
<svg style="left:1471px;top:776px;" width="13" height="13" viewBox="0 0 13 13"><path d="M0.5 12.5 V5.5 L5.5 0.5 H12.5 V6 H6 V12.5Z" fill="#cfcfcf"/><path d="M6.5 12.5 V6.5 H12.5" fill="none" stroke="#222" stroke-width="1.2"/><rect x="5" y="5" width="3" height="3" fill="#222"/></svg>
<div style="left:1344px;top:796px;width:201px;height:1px;background:#363636;"></div>
<div style="left:1344px;top:797px;width:201px;height:1px;background:#565656;"></div>
<div style="left:1129px;width:300px;text-align:right;top:802px;height:20px;line-height:20px;font-size:9.5px;color:#dcdcdc;white-space:nowrap;letter-spacing:-0.3px;">Kontur ausrichten:</div>
<div style="left:1435px;top:804px;width:16px;height:16px;background:#2a2a2a;border:1px solid #202020;"></div>
<svg style="left:1437px;top:806px;" width="13" height="13" viewBox="0 0 13 13"><path d="M1.5 0 V11.5 H13" fill="none" stroke="#e4e4e4" stroke-width="1.2"/><path d="M4.5 0 V8.5 H13" fill="none" stroke="#e4e4e4" stroke-width="1.2"/></svg>
<svg style="left:1455px;top:806px;" width="13" height="13" viewBox="0 0 13 13"><path d="M3 0 V10 H13" fill="none" stroke="#cfcfcf" stroke-width="3"/><path d="M3 0 V10 H13" fill="none" stroke="#474747" stroke-width="0.8"/></svg>
<svg style="left:1471px;top:806px;" width="14" height="13" viewBox="0 0 14 13"><path d="M3.5 0 V9.5 H14" fill="none" stroke="#cfcfcf" stroke-width="3.5"/><path d="M5 0 V8 H14" fill="none" stroke="#474747" stroke-width="0.9"/></svg>
<div style="left:1344px;top:825px;width:201px;height:1px;background:#363636;"></div>
<div style="left:1344px;top:826px;width:201px;height:1px;background:#565656;"></div>
<div style="left:1129px;width:300px;text-align:right;top:831px;height:20px;line-height:20px;font-size:9.5px;color:#dcdcdc;white-space:nowrap;letter-spacing:-0.3px;">Typ:</div>
<div style="left:1435px;top:834px;width:94px;height:15px;background:#000;border:2px solid #b0b0b0;outline:1px solid #333;outline-offset:-1px;"></div>
<div style="left:1436px;top:835px;width:92px;height:13px;border:1px solid #bdbdbd;background:#000;box-shadow:inset 0 0 0 1px #000;"></div>
<svg style="left:1528px;top:834px;" width="14" height="15" viewBox="0 0 14 15"><rect x="0.5" y="0.5" width="13" height="14" fill="#606060" stroke="#383838"/><path d="M3.5 5.5 L10.5 5.5 L7.0 10.5Z" fill="#e4e4e4"/></svg>
<div style="left:1129px;width:300px;text-align:right;top:851px;height:20px;line-height:20px;font-size:9.5px;color:#dcdcdc;white-space:nowrap;letter-spacing:-0.3px;">Anfang:</div>
<div style="left:1435px;top:854px;width:94px;height:15px;background:#b2b2b2;border:1px solid #383838;border-bottom-color:#5c5c5c;border-right-color:#5c5c5c;color:#111;font-size:9.5px;line-height:13px;padding-left:2px;white-space:nowrap;overflow:hidden;letter-spacing:-0.3px;">Ohne</div>
<svg style="left:1528px;top:854px;" width="14" height="15" viewBox="0 0 14 15"><rect x="0.5" y="0.5" width="13" height="14" fill="#606060" stroke="#383838"/><path d="M3.5 5.5 L10.5 5.5 L7.0 10.5Z" fill="#e4e4e4"/></svg>
<div style="left:1129px;width:300px;text-align:right;top:871px;height:20px;line-height:20px;font-size:9.5px;color:#dcdcdc;white-space:nowrap;letter-spacing:-0.3px;">Ende:</div>
<div style="left:1435px;top:874px;width:94px;height:15px;background:#b2b2b2;border:1px solid #383838;border-bottom-color:#5c5c5c;border-right-color:#5c5c5c;color:#111;font-size:9.5px;line-height:13px;padding-left:2px;white-space:nowrap;overflow:hidden;letter-spacing:-0.3px;">Ohne</div>
<svg style="left:1528px;top:874px;" width="14" height="15" viewBox="0 0 14 15"><rect x="0.5" y="0.5" width="13" height="14" fill="#606060" stroke="#383838"/><path d="M3.5 5.5 L10.5 5.5 L7.0 10.5Z" fill="#e4e4e4"/></svg>
<div style="left:1129px;width:300px;text-align:right;top:891px;height:20px;line-height:20px;font-size:9.5px;color:#dcdcdc;white-space:nowrap;letter-spacing:-0.3px;">Farbe für Lücke:</div>
<div style="left:1435px;top:894px;width:94px;height:15px;background:#b2b2b2;border:1px solid #383838;border-bottom-color:#5c5c5c;border-right-color:#5c5c5c;color:#333;font-size:9.5px;line-height:13px;padding-left:2px;white-space:nowrap;overflow:hidden;"></div>
<svg style="left:1437px;top:896px;" width="11" height="11" viewBox="0 0 11 11"><rect x="0" y="0" width="11" height="11" fill="#fff"/><path d="M0.5 10.5 L10.5 0.5" stroke="#e02020" stroke-width="2.2"/></svg>
<div style="left:1452px;top:891px;height:20px;line-height:20px;font-size:9.5px;color:#3a3a3a;white-space:nowrap;letter-spacing:-0.3px;">[Ohne]</div>
<svg style="left:1528px;top:894px;" width="14" height="15" viewBox="0 0 14 15"><rect x="0.5" y="0.5" width="13" height="14" fill="#4c4c4c" stroke="#383838"/><path d="M3.5 5.5 L10.5 5.5 L7.0 10.5Z" fill="#8c8c8c"/></svg>
<div style="left:1129px;width:300px;text-align:right;top:910px;height:20px;line-height:20px;font-size:9.5px;color:#dcdcdc;white-space:nowrap;letter-spacing:-0.3px;">Farbton für Lücke:</div>
<div style="left:1435px;top:914px;width:33px;height:15px;background:#979797;border:1px solid #383838;border-bottom-color:#5c5c5c;border-right-color:#5c5c5c;color:#111;font-size:11px;line-height:13px;padding-left:3px;white-space:nowrap;overflow:hidden;"></div>
<svg style="left:1468px;top:914px;" width="14" height="15" viewBox="0 0 14 15"><rect x="0.5" y="0.5" width="13" height="14" fill="#4c4c4c" stroke="#383838"/><path d="M5.0 4.0 L10.0 7.5 L5.0 11.0Z" fill="#8c8c8c"/></svg>
</body></html>
